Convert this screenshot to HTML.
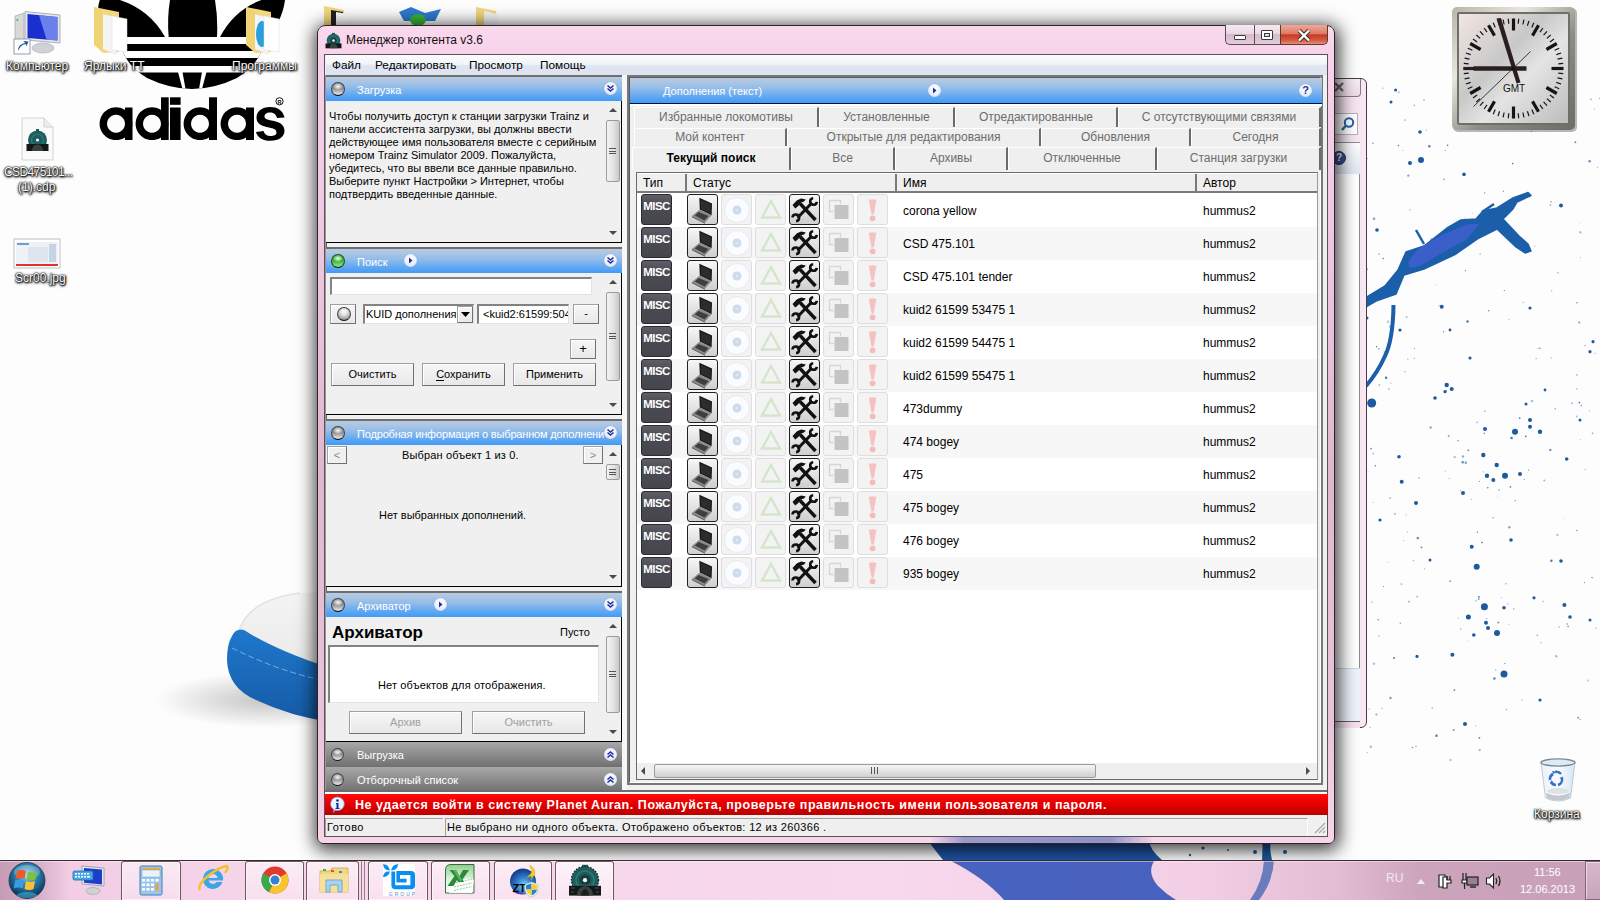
<!DOCTYPE html>
<html><head><meta charset="utf-8">
<style>
*{margin:0;padding:0;box-sizing:border-box}
html,body{width:1600px;height:900px;overflow:hidden;background:#fdfdfd;font-family:"Liberation Sans",sans-serif;font-size:11px;color:#000}
.a{position:absolute}
.t{position:absolute;white-space:nowrap;line-height:1}
/* window */
#win{left:317px;top:25px;width:1018px;height:819px;border-radius:8px 8px 6px 6px;background:linear-gradient(180deg,#f9d8ec 0%,#f8d2ea 4%,#ecc6de 30%,#dfb8d0 55%,#e8c4da 85%,#f8d6ea 100%);border:1px solid #2e2228;box-shadow:1px 3px 18px 3px rgba(0,0,0,.78)}
#client{left:324px;top:54px;width:1004px;height:783px;background:#f0f0f0;border:1px solid #5e5058}
.menu{left:326px;top:55px;width:1001px;height:20px;background:linear-gradient(#fbfcfd 0%,#f1f3f9 45%,#dfe4f1 55%,#dde3f0 100%)}
.mi{top:60px;font-size:11.8px}
.hdr{position:absolute;height:24px;background:linear-gradient(#bacbe0 0%,#95bde9 40%,#5aa5f2 80%,#409bf7 100%);color:#fff}
.hdrg{position:absolute;height:25px;background:linear-gradient(#a8a8a8 0%,#8c8c8c 50%,#707070 100%);color:#fff}
.ball{position:absolute;width:14px;height:14px;border-radius:50%;border:1.5px solid #404448;border-bottom-color:#0c0f14;background:radial-gradient(ellipse 40% 28% at 50% 30%,#f4f4f4 0%,rgba(244,244,244,.6) 50%,rgba(244,244,244,0) 100%),linear-gradient(#9c9c9c 0%,#8a8a8a 45%,#b8b8b8 70%,#dcdcdc 90%,#cfcfcf 100%)}
.ballg{border-color:#1f4f1f;border-bottom-color:#0a200a;background:radial-gradient(ellipse 40% 28% at 50% 30%,#e8ffe8 0%,rgba(220,255,220,.6) 50%,rgba(220,255,220,0) 100%),linear-gradient(#4cc04a 0%,#3aaa38 45%,#6ad468 75%,#8ee28a 100%)}
.chev{position:absolute;width:13px;height:13px;border-radius:50%;background:radial-gradient(circle at 50% 40%,#fff 0%,#eef2ff 50%,#b9c6ea 100%);box-shadow:0 0 1px #7f8fc0}
.pline{position:absolute;left:326px;width:296px;height:1px;background:#000}
.gline{position:absolute;left:326px;width:296px;height:2px;background:#6e6e6e}
.sb{position:absolute;width:15px;background:#f0f0f0}
.btn{position:absolute;background:linear-gradient(#f6f6f6,#e8e8e8);border:1px solid #a0a0a0;border-right-color:#707070;border-bottom-color:#707070;box-shadow:inset 1px 1px 0 #fff;text-align:center}
.tab{position:absolute;height:21px;background:#efefef;border-top:1px solid #fff;border-left:1px solid #fff;border-right:2px solid #6b6b6b;color:#6d6d6d;text-align:center;font-size:12px;line-height:19px}
.row{position:absolute;left:637px;width:680px;height:33px}
.ic{position:absolute;width:31px;height:31px;border-radius:3px}
.misc{background:linear-gradient(#5e5e66,#4a4a52 40%,#46464e);border:1px solid #2a2a30;color:#fff;font-weight:bold;font-size:11.5px;text-align:center;line-height:22px;letter-spacing:-0.6px}
.ion{background:linear-gradient(#f7f7f7,#cfcfcf);border:1px solid #1f1f1f}
.ioff{background:#f3f3f3;border:1px solid #dedede}

.up{position:absolute;width:0;height:0;border-left:4px solid transparent;border-right:4px solid transparent;border-bottom:4px solid #4a4a4a}
.dn{position:absolute;width:0;height:0;border-left:4px solid transparent;border-right:4px solid transparent;border-top:4px solid #4a4a4a}
.thumb{position:absolute;width:14px;border:1px solid #9c9c9c;border-radius:2px;background:linear-gradient(90deg,#f4f4f4,#e4e4e4 50%,#c9c9c9)}

.lt{font-size:12px}

.dl{font-size:12px;color:#fff;text-shadow:0 0 2px #000,1px 1px 2px #000,0 0 1px #000,0 1px 3px #000}
</style></head><body>

<!-- ============ DESKTOP ============ -->
<svg class="a" style="left:0;top:0" width="320" height="160" viewBox="0 0 320 160">
<defs><clipPath id="trc"><path d="M99.8 0H285Q282 24 264 38Q263 62 237 78Q214 89 192 89Q170 89 147 78Q121 62 120 38Q92 22 99.8 0z"/></clipPath></defs>
<g clip-path="url(#trc)">
<rect x="90" y="0" width="200" height="95" fill="#000"/>
<path d="M120 0H170Q167 18 168.7 37H165Q150 10 120 0z" fill="#fff"/>
<path d="M215 0H261.3Q234 10 220 37H217Q218 18 215 0z" fill="#fff"/>
<rect x="90" y="37" width="200" height="7" fill="#fff"/>
<rect x="90" y="51" width="200" height="7" fill="#fff"/>
<rect x="90" y="66" width="200" height="6.5" fill="#fff"/>
<path d="M178 72h4.5l3 17h-3z" fill="#fff"/>
<path d="M202 72h4.5l-4.5 17h-3z" fill="#fff"/>
</g>
<g fill="#000">
<path fill-rule="evenodd" d="M116 107.3a16.4 16.4 0 1 0 0.01 0zM116 114.8a9 9 0 1 1-0.01 0z"/>
<rect x="125" y="107.5" width="7.5" height="32.5"/>
<path fill-rule="evenodd" d="M152 107.3a16.4 16.4 0 1 0 0.01 0zM152 114.8a9 9 0 1 1-0.01 0z"/>
<rect x="161" y="97.3" width="7.7" height="42.7"/>
<rect x="170" y="107.5" width="10.6" height="32.5"/>
<rect x="170" y="97.3" width="10.6" height="7.5"/>
<path fill-rule="evenodd" d="M200 107.3a16.4 16.4 0 1 0 0.01 0zM200 114.8a9 9 0 1 1-0.01 0z"/>
<rect x="209" y="97.3" width="8" height="42.7"/>
<path fill-rule="evenodd" d="M237 107.3a16.4 16.4 0 1 0 0.01 0zM237 114.8a9 9 0 1 1-0.01 0z"/>
<rect x="246" y="107.5" width="8" height="32.5"/>
<path d="M284.5 117.5C283 110 277 107 270 107C262 107 256.5 111.5 256.5 117.5C256.5 124.5 262 126 269 127.5C274 128.5 276.5 129.5 276.5 132.5C276.5 135 274 136 270.5 136C267 136 264.5 134.5 263.5 131L256 132C257.5 137.5 262.5 140.8 270.5 140.8C279 140.8 284.5 136.5 284.5 131C284.5 123.8 278.5 122 271.5 120.5C267 119.5 264.5 119 264.5 116.5C264.5 114 267 112.5 270 112.5C273.5 112.5 276 114 277 118z"/>
<circle cx="279.5" cy="101.3" r="3.6" fill="none" stroke="#000" stroke-width="0.9"/><text x="279.5" y="103.6" font-family="Liberation Sans" font-weight="bold" font-size="5.5" text-anchor="middle" fill="#000">R</text>
</g>
</svg>
<svg class="a" style="left:150px;top:580px" width="180" height="160" viewBox="150 580 180 160">
<defs><radialGradient id="shd" cx="0.5" cy="0.5" r="0.5"><stop offset="0" stop-color="#000" stop-opacity="0.22"/><stop offset="1" stop-color="#000" stop-opacity="0"/></radialGradient>
<linearGradient id="shw" x1="0" y1="0" x2="0" y2="1"><stop offset="0" stop-color="#f4f4f4"/><stop offset="0.6" stop-color="#ececec"/><stop offset="1" stop-color="#d9d9d9"/></linearGradient>
<linearGradient id="shb" x1="0" y1="0" x2="0" y2="1"><stop offset="0" stop-color="#1f78cc"/><stop offset="1" stop-color="#155aa5"/></linearGradient></defs>
<ellipse cx="265" cy="700" rx="110" ry="28" fill="url(#shd)"/>
<path d="M238 634Q246 600 300 593L330 592V690Q290 680 238 640z" fill="url(#shw)"/><path d="M238 634Q246 600 300 593" fill="none" stroke="#e2e2e2" stroke-width="1.5"/>
<path d="M232 636Q236 628 244 630Q275 650 330 668V722Q290 716 256 700Q228 688 227 660Q227 644 232 636z" fill="url(#shb)"/>
<path d="M232 648Q280 672 330 682" fill="none" stroke="#8cc0ee" stroke-width="0.8" stroke-dasharray="6 3"/>
</svg>
<svg class="a" style="left:1330px;top:80px" width="270" height="700" viewBox="1330 80 270 700">
<path d="M1340 318L1362 300 1385 286 1398 270 1406 252 1424 246 1447 228 1461 220 1476 219 1483 211 1497 208 1513 198 1528 192.5 1531 195.5 1517 202 1513 209 1503 219 1519 236 1528 244 1531 251 1525 253 1516 247 1497 229 1479 238 1456 254 1424 269 1404 275 1396 294 1376 301 1352 315 1340 335z" fill="#1b5fab" stroke="#1b5fab" stroke-width="1.5" stroke-linejoin="round"/>
<path d="M1408 262L1418 249 1440 236 1468 224 1479 224 1466 240 1445 251 1420 266 1410 268z" fill="#3b5fc9"/>
<path d="M1393.5 305Q1393 340 1385 356Q1378 372 1366 386" fill="none" stroke="#1b5fab" stroke-width="4"/>
<path d="M1424 244L1416 230M1482 212l12-8" stroke="#1b5fab" stroke-width="2.5"/>
<circle cx="1441.7" cy="306.7" r="2" fill="#1d5a9e"/>
<circle cx="1530" cy="308" r="1.6" fill="#1d5a9e"/>
<circle cx="1470" cy="358" r="1.6" fill="#1d5a9e"/>
<circle cx="1446.7" cy="385" r="2.2" fill="#1d5a9e"/>
<circle cx="1451.7" cy="389" r="2" fill="#1d5a9e"/>
<circle cx="1445" cy="391.7" r="1.6" fill="#1d5a9e"/>
<circle cx="1435" cy="398" r="1.8" fill="#1d5a9e"/>
<circle cx="1371.7" cy="403" r="4.5" fill="#1d5a9e"/>
<circle cx="1485" cy="429" r="2" fill="#1d5a9e"/>
<circle cx="1515" cy="431.7" r="3" fill="#1d5a9e"/>
<circle cx="1530" cy="420" r="2" fill="#1d5a9e"/>
<circle cx="1530" cy="426.7" r="2" fill="#1d5a9e"/>
<circle cx="1540" cy="431.7" r="2.2" fill="#1d5a9e"/>
<circle cx="1526" cy="404" r="1.5" fill="#1d5a9e"/>
<circle cx="1483.3" cy="455" r="2.2" fill="#1d5a9e"/>
<circle cx="1496.7" cy="465" r="2.2" fill="#1d5a9e"/>
<circle cx="1505" cy="475.7" r="3" fill="#1d5a9e"/>
<circle cx="1487" cy="475.7" r="2.2" fill="#1d5a9e"/>
<circle cx="1493.3" cy="480" r="2" fill="#1d5a9e"/>
<circle cx="1520" cy="474" r="2" fill="#1d5a9e"/>
<circle cx="1566.7" cy="459" r="1.8" fill="#1d5a9e"/>
<circle cx="1401.7" cy="481.7" r="2" fill="#1d5a9e"/>
<circle cx="1463" cy="493" r="2" fill="#1d5a9e"/>
<circle cx="1416" cy="503" r="2" fill="#1d5a9e"/>
<circle cx="1399" cy="456.7" r="1.8" fill="#1d5a9e"/>
<circle cx="1590" cy="351.7" r="1.6" fill="#1d5a9e"/>
<circle cx="1593" cy="341.7" r="1.6" fill="#1d5a9e"/>
<circle cx="1471.7" cy="546.7" r="2" fill="#1d5a9e"/>
<circle cx="1511" cy="540" r="1.8" fill="#1d5a9e"/>
<circle cx="1476.7" cy="566.7" r="3" fill="#1d5a9e"/>
<circle cx="1561" cy="561" r="1.8" fill="#1d5a9e"/>
<circle cx="1484.4" cy="606.7" r="3.5" fill="#1d5a9e"/>
<circle cx="1504" cy="607.7" r="1.8" fill="#1d5a9e"/>
<circle cx="1468.4" cy="617" r="2.5" fill="#1d5a9e"/>
<circle cx="1486" cy="622.7" r="2" fill="#1d5a9e"/>
<circle cx="1488" cy="628" r="2" fill="#1d5a9e"/>
<circle cx="1497" cy="633" r="3" fill="#1d5a9e"/>
<circle cx="1473.8" cy="635" r="1.8" fill="#1d5a9e"/>
<circle cx="1564.4" cy="605" r="2" fill="#1d5a9e"/>
<circle cx="1534" cy="597.8" r="1.6" fill="#1d5a9e"/>
<circle cx="1504" cy="674" r="3.5" fill="#1d5a9e"/>
<circle cx="1452.4" cy="654.7" r="2" fill="#1d5a9e"/>
<circle cx="1417" cy="656.4" r="1.6" fill="#1d5a9e"/>
<circle cx="1465" cy="724" r="2" fill="#1d5a9e"/>
<circle cx="1570" cy="617" r="1.8" fill="#1d5a9e"/>
<circle cx="1395.6" cy="90" r="1.5" fill="#1d5a9e"/>
<circle cx="1391" cy="102" r="1.5" fill="#1d5a9e"/>
<circle cx="1420" cy="132" r="1.8" fill="#1d5a9e"/>
<circle cx="1421" cy="160" r="3" fill="#1d5a9e"/>
<circle cx="1410" cy="163" r="2" fill="#1d5a9e"/>
<circle cx="1464" cy="174.4" r="1.8" fill="#1d5a9e"/>
<circle cx="1561" cy="205.6" r="2" fill="#1d5a9e"/>
<circle cx="1377" cy="230" r="1.8" fill="#1d5a9e"/>
<circle cx="1367" cy="318" r="1.5" fill="#1d5a9e"/>
<circle cx="1400" cy="330" r="1.6" fill="#1d5a9e"/>
<circle cx="1450" cy="330" r="1.4" fill="#1d5a9e"/>
<circle cx="1545" cy="390" r="1.4" fill="#1d5a9e"/>
<circle cx="1580" cy="420" r="1.5" fill="#1d5a9e"/>
<circle cx="1380" cy="520" r="1.6" fill="#1d5a9e"/>
<circle cx="1430" cy="560" r="1.5" fill="#1d5a9e"/>
<circle cx="1540" cy="700" r="1.6" fill="#1d5a9e"/>
<circle cx="1590" cy="620" r="1.5" fill="#1d5a9e"/>
<circle cx="1465.8" cy="462.8" r="1.2" fill="#2a62a8" opacity="0.61"/>
<circle cx="1479.4" cy="481.5" r="0.6" fill="#2a62a8" opacity="0.79"/>
<circle cx="1471.6" cy="499.4" r="0.6" fill="#2a62a8" opacity="0.40"/>
<circle cx="1429.3" cy="146.2" r="1.2" fill="#2a62a8" opacity="0.84"/>
<circle cx="1510.4" cy="486.9" r="0.8" fill="#2a62a8" opacity="0.88"/>
<circle cx="1515.2" cy="500.5" r="0.6" fill="#2a62a8" opacity="0.69"/>
<circle cx="1558.8" cy="127.6" r="0.5" fill="#2a62a8" opacity="0.45"/>
<circle cx="1414.3" cy="105.3" r="0.8" fill="#2a62a8" opacity="0.53"/>
<circle cx="1499.8" cy="216.8" r="0.6" fill="#2a62a8" opacity="0.70"/>
<circle cx="1477.4" cy="532.2" r="0.8" fill="#2a62a8" opacity="0.71"/>
<circle cx="1454.7" cy="457.1" r="1.2" fill="#2a62a8" opacity="0.40"/>
<circle cx="1417.2" cy="596.6" r="0.9" fill="#2a62a8" opacity="0.51"/>
<circle cx="1372.2" cy="602.2" r="0.8" fill="#2a62a8" opacity="0.41"/>
<circle cx="1426.3" cy="130.1" r="0.5" fill="#2a62a8" opacity="0.82"/>
<circle cx="1355.1" cy="226.6" r="0.5" fill="#2a62a8" opacity="0.61"/>
<circle cx="1595.2" cy="353.3" r="0.5" fill="#2a62a8" opacity="0.66"/>
<circle cx="1403.6" cy="540.6" r="0.7" fill="#2a62a8" opacity="0.40"/>
<circle cx="1436.5" cy="735.8" r="1.2" fill="#2a62a8" opacity="0.86"/>
<circle cx="1388.0" cy="562.2" r="0.5" fill="#2a62a8" opacity="0.38"/>
<circle cx="1550.3" cy="204.9" r="0.9" fill="#2a62a8" opacity="0.45"/>
<circle cx="1479.7" cy="750.1" r="1.2" fill="#2a62a8" opacity="0.42"/>
<circle cx="1512.7" cy="163.6" r="0.8" fill="#2a62a8" opacity="0.89"/>
<circle cx="1355.1" cy="668.4" r="1.2" fill="#2a62a8" opacity="0.68"/>
<circle cx="1599.5" cy="98.3" r="0.6" fill="#2a62a8" opacity="0.57"/>
<circle cx="1564.3" cy="518.2" r="0.5" fill="#2a62a8" opacity="0.37"/>
<circle cx="1390.9" cy="383.0" r="0.5" fill="#2a62a8" opacity="0.77"/>
<circle cx="1435.6" cy="285.0" r="0.5" fill="#2a62a8" opacity="0.39"/>
<circle cx="1406.1" cy="514.7" r="0.5" fill="#2a62a8" opacity="0.68"/>
<circle cx="1446.1" cy="390.9" r="0.9" fill="#2a62a8" opacity="0.62"/>
<circle cx="1495.8" cy="669.9" r="0.6" fill="#2a62a8" opacity="0.69"/>
<circle cx="1431.1" cy="239.2" r="0.9" fill="#2a62a8" opacity="0.49"/>
<circle cx="1401.5" cy="584.1" r="0.9" fill="#2a62a8" opacity="0.46"/>
<circle cx="1587.8" cy="680.5" r="0.9" fill="#2a62a8" opacity="0.39"/>
<circle cx="1366.6" cy="158.6" r="0.9" fill="#2a62a8" opacity="0.88"/>
<circle cx="1413.4" cy="560.6" r="0.7" fill="#2a62a8" opacity="0.58"/>
<circle cx="1576.7" cy="416.4" r="0.9" fill="#2a62a8" opacity="0.45"/>
<circle cx="1531.5" cy="131.4" r="0.6" fill="#2a62a8" opacity="0.61"/>
<circle cx="1515.1" cy="500.7" r="0.5" fill="#2a62a8" opacity="0.50"/>
<circle cx="1579.8" cy="222.7" r="0.5" fill="#2a62a8" opacity="0.39"/>
<circle cx="1455.8" cy="253.1" r="0.5" fill="#2a62a8" opacity="0.45"/>
<circle cx="1445.4" cy="471.2" r="0.6" fill="#2a62a8" opacity="0.40"/>
<circle cx="1388.9" cy="389.0" r="0.7" fill="#2a62a8" opacity="0.71"/>
<circle cx="1524.3" cy="479.5" r="0.6" fill="#2a62a8" opacity="0.67"/>
<circle cx="1581.3" cy="405.5" r="0.7" fill="#2a62a8" opacity="0.74"/>
<circle cx="1590.9" cy="99.3" r="1" fill="#2a62a8" opacity="0.39"/>
<circle cx="1371.5" cy="295.0" r="0.6" fill="#2a62a8" opacity="0.90"/>
<circle cx="1373.4" cy="453.6" r="1" fill="#2a62a8" opacity="0.37"/>
<circle cx="1584.4" cy="582.6" r="0.6" fill="#2a62a8" opacity="0.79"/>
<circle cx="1579.2" cy="322.5" r="1" fill="#2a62a8" opacity="0.61"/>
<circle cx="1374.0" cy="663.7" r="1.2" fill="#2a62a8" opacity="0.37"/>
<circle cx="1477.5" cy="94.8" r="1" fill="#2a62a8" opacity="0.56"/>
<circle cx="1497.8" cy="496.0" r="0.5" fill="#2a62a8" opacity="0.40"/>
<circle cx="1383.3" cy="258.6" r="0.8" fill="#2a62a8" opacity="0.75"/>
<circle cx="1450.2" cy="581.2" r="0.9" fill="#2a62a8" opacity="0.60"/>
<circle cx="1468.3" cy="450.3" r="0.9" fill="#2a62a8" opacity="0.76"/>
<circle cx="1362.3" cy="490.9" r="0.8" fill="#2a62a8" opacity="0.36"/>
<circle cx="1589.6" cy="161.2" r="1.2" fill="#2a62a8" opacity="0.69"/>
<circle cx="1580.5" cy="257.7" r="0.5" fill="#2a62a8" opacity="0.55"/>
<circle cx="1390.1" cy="497.9" r="0.9" fill="#2a62a8" opacity="0.44"/>
<circle cx="1576.9" cy="530.5" r="0.8" fill="#2a62a8" opacity="0.62"/>
<circle cx="1414.2" cy="358.2" r="0.7" fill="#2a62a8" opacity="0.46"/>
<circle cx="1460.6" cy="629.0" r="0.6" fill="#2a62a8" opacity="0.83"/>
<circle cx="1449.2" cy="478.6" r="0.7" fill="#2a62a8" opacity="0.47"/>
<circle cx="1388.0" cy="321.8" r="1.2" fill="#2a62a8" opacity="0.37"/>
<circle cx="1370.7" cy="746.7" r="1.2" fill="#2a62a8" opacity="0.44"/>
<circle cx="1465.4" cy="270.7" r="0.6" fill="#2a62a8" opacity="0.81"/>
<circle cx="1448.7" cy="436.0" r="1" fill="#2a62a8" opacity="0.52"/>

<circle cx="1558.0" cy="272.7" r="0.9" fill="#2a62a8" opacity="0.37"/>
<circle cx="1528.6" cy="470.1" r="0.7" fill="#2a62a8" opacity="0.71"/>
<circle cx="1493.2" cy="517.7" r="0.8" fill="#2a62a8" opacity="0.60"/>
<circle cx="1361.1" cy="645.0" r="0.6" fill="#2a62a8" opacity="0.78"/>

<circle cx="1509.3" cy="527.2" r="1.2" fill="#2a62a8" opacity="0.55"/>
<circle cx="1374.1" cy="218.7" r="1.2" fill="#2a62a8" opacity="0.61"/>
<circle cx="1398.8" cy="92.3" r="0.8" fill="#2a62a8" opacity="0.64"/>
<circle cx="1363.9" cy="237.9" r="1.2" fill="#2a62a8" opacity="0.54"/>
<circle cx="1525.8" cy="436.3" r="0.9" fill="#2a62a8" opacity="0.90"/>
<circle cx="1394.0" cy="657.9" r="1" fill="#2a62a8" opacity="0.85"/>
<circle cx="1376.4" cy="714.5" r="1" fill="#2a62a8" opacity="0.56"/>
<circle cx="1465.4" cy="217.9" r="0.5" fill="#2a62a8" opacity="0.56"/>
<circle cx="1494.4" cy="678.5" r="1.2" fill="#2a62a8" opacity="0.80"/>
<circle cx="1439.1" cy="305.4" r="0.6" fill="#2a62a8" opacity="0.40"/>
<circle cx="1567.2" cy="623.9" r="1" fill="#2a62a8" opacity="0.42"/>
<circle cx="1414.4" cy="348.4" r="0.5" fill="#2a62a8" opacity="0.89"/>
<circle cx="1486.6" cy="618.8" r="0.7" fill="#2a62a8" opacity="0.49"/>
<circle cx="1531.0" cy="95.6" r="0.9" fill="#2a62a8" opacity="0.40"/>
<circle cx="1463.0" cy="456.5" r="1.2" fill="#2a62a8" opacity="0.50"/>
<circle cx="1580.3" cy="232.3" r="1.2" fill="#2a62a8" opacity="0.39"/>
<circle cx="1551.0" cy="201.7" r="0.7" fill="#2a62a8" opacity="0.73"/>
<circle cx="1579.4" cy="402.6" r="0.9" fill="#2a62a8" opacity="0.85"/>
<circle cx="1482.0" cy="542.6" r="0.8" fill="#2a62a8" opacity="0.87"/>
<circle cx="1475.7" cy="725.7" r="0.5" fill="#2a62a8" opacity="0.77"/>
<circle cx="1462.7" cy="462.2" r="1.2" fill="#2a62a8" opacity="0.75"/>
<circle cx="1511.5" cy="437.9" r="1.2" fill="#2a62a8" opacity="0.85"/>
<circle cx="1417.8" cy="538.1" r="1.2" fill="#2a62a8" opacity="0.83"/>
<circle cx="1504.3" cy="290.5" r="0.6" fill="#2a62a8" opacity="0.88"/>
<circle cx="1483.4" cy="471.8" r="0.6" fill="#2a62a8" opacity="0.58"/>
<circle cx="1383.0" cy="88.3" r="0.8" fill="#2a62a8" opacity="0.37"/>
<circle cx="1592.5" cy="433.3" r="0.8" fill="#2a62a8" opacity="0.65"/>
<circle cx="1597.4" cy="167.3" r="0.5" fill="#2a62a8" opacity="0.73"/>
<circle cx="1371.1" cy="448.6" r="0.8" fill="#2a62a8" opacity="0.86"/>
<circle cx="1551.1" cy="357.8" r="0.6" fill="#2a62a8" opacity="0.61"/>
<circle cx="1386.1" cy="377.7" r="1.2" fill="#2a62a8" opacity="0.86"/>
<circle cx="1580.4" cy="439.4" r="0.5" fill="#2a62a8" opacity="0.46"/>
<circle cx="1506.4" cy="709.6" r="0.6" fill="#2a62a8" opacity="0.74"/>
<circle cx="1594.4" cy="109.0" r="0.6" fill="#2a62a8" opacity="0.47"/>
<circle cx="1523.3" cy="302.4" r="0.7" fill="#2a62a8" opacity="0.48"/>
<circle cx="1477.2" cy="422.3" r="0.9" fill="#2a62a8" opacity="0.42"/>
<circle cx="1480.1" cy="254.1" r="0.6" fill="#2a62a8" opacity="0.74"/>
<circle cx="1570.3" cy="100.7" r="1" fill="#2a62a8" opacity="0.58"/>
<circle cx="1484.7" cy="192.8" r="0.6" fill="#2a62a8" opacity="0.83"/>
<circle cx="1485.8" cy="232.4" r="0.6" fill="#2a62a8" opacity="0.82"/>
<circle cx="1504.9" cy="663.3" r="0.6" fill="#2a62a8" opacity="0.85"/>
<circle cx="1508.8" cy="319.6" r="0.6" fill="#2a62a8" opacity="0.52"/>
<circle cx="1432.2" cy="707.9" r="0.6" fill="#2a62a8" opacity="0.78"/>
<circle cx="1402.7" cy="150.4" r="0.6" fill="#2a62a8" opacity="0.42"/>
<circle cx="1376.6" cy="346.8" r="0.8" fill="#2a62a8" opacity="0.81"/>
<circle cx="1458.3" cy="618.2" r="0.6" fill="#2a62a8" opacity="0.46"/>
<circle cx="1508.9" cy="624.2" r="0.5" fill="#2a62a8" opacity="0.46"/>
<circle cx="1522.2" cy="700.2" r="0.7" fill="#2a62a8" opacity="0.41"/>
<circle cx="1478.9" cy="596.8" r="0.9" fill="#2a62a8" opacity="0.90"/>
<circle cx="1559.1" cy="626.9" r="0.8" fill="#2a62a8" opacity="0.41"/>
<circle cx="1364.2" cy="457.4" r="0.9" fill="#2a62a8" opacity="0.85"/>
<circle cx="1472.9" cy="213.0" r="0.5" fill="#2a62a8" opacity="0.46"/>

<circle cx="1370.2" cy="727.3" r="0.8" fill="#2a62a8" opacity="0.39"/>
<circle cx="1378.7" cy="348.8" r="0.8" fill="#2a62a8" opacity="0.63"/>
<circle cx="1460.4" cy="490.6" r="0.5" fill="#2a62a8" opacity="0.70"/>
<circle cx="1365.0" cy="220.2" r="0.8" fill="#2a62a8" opacity="0.60"/>
<circle cx="1536.1" cy="358.6" r="0.6" fill="#2a62a8" opacity="0.68"/>
<circle cx="1378.2" cy="619.8" r="0.7" fill="#2a62a8" opacity="0.84"/>
<circle cx="1551.4" cy="560.7" r="1.2" fill="#2a62a8" opacity="0.85"/>
<circle cx="1585.2" cy="469.5" r="0.6" fill="#2a62a8" opacity="0.63"/>
<circle cx="1595.8" cy="628.3" r="0.7" fill="#2a62a8" opacity="0.50"/>
<circle cx="1383.5" cy="586.5" r="0.6" fill="#2a62a8" opacity="0.80"/>
<circle cx="1454.4" cy="690.2" r="0.9" fill="#2a62a8" opacity="0.73"/>
<circle cx="1543.0" cy="601.5" r="0.8" fill="#2a62a8" opacity="0.46"/>
<circle cx="1400.3" cy="623.2" r="0.7" fill="#2a62a8" opacity="0.61"/>
<circle cx="1357.6" cy="325.1" r="1" fill="#2a62a8" opacity="0.85"/>
<circle cx="1367.1" cy="269.3" r="1" fill="#2a62a8" opacity="0.51"/>
<circle cx="1407.9" cy="359.1" r="0.6" fill="#2a62a8" opacity="0.64"/>
<circle cx="1450.5" cy="759.9" r="1" fill="#2a62a8" opacity="0.47"/>
<circle cx="1384.3" cy="351.9" r="0.9" fill="#2a62a8" opacity="0.36"/>
<circle cx="1505.8" cy="583.7" r="0.7" fill="#2a62a8" opacity="0.59"/>
<circle cx="1478.7" cy="598.9" r="1" fill="#2a62a8" opacity="0.56"/>
<circle cx="1379.1" cy="254.3" r="0.7" fill="#2a62a8" opacity="0.65"/>
<circle cx="1479.4" cy="737.8" r="0.9" fill="#2a62a8" opacity="0.82"/>
<circle cx="1379.4" cy="384.9" r="1" fill="#2a62a8" opacity="0.39"/>
<circle cx="1501.4" cy="597.5" r="0.5" fill="#2a62a8" opacity="0.56"/>
<circle cx="1585.0" cy="345.5" r="0.6" fill="#2a62a8" opacity="0.82"/>
<circle cx="1487.8" cy="487.7" r="0.8" fill="#2a62a8" opacity="0.87"/>
<circle cx="1458.1" cy="440.6" r="0.9" fill="#2a62a8" opacity="0.52"/>
<circle cx="1484.9" cy="411.2" r="0.7" fill="#2a62a8" opacity="0.66"/>
<circle cx="1424.5" cy="568.7" r="0.7" fill="#2a62a8" opacity="0.36"/>
<circle cx="1544.3" cy="480.4" r="1" fill="#2a62a8" opacity="0.44"/>
<circle cx="1539.9" cy="348.2" r="0.7" fill="#2a62a8" opacity="0.76"/>
<circle cx="1367.3" cy="752.4" r="0.7" fill="#2a62a8" opacity="0.39"/>
<circle cx="1576.9" cy="374.9" r="0.8" fill="#2a62a8" opacity="0.49"/>
<circle cx="1540.1" cy="115.7" r="0.5" fill="#2a62a8" opacity="0.87"/>
<circle cx="1532.1" cy="401.1" r="1.2" fill="#2a62a8" opacity="0.48"/>
<circle cx="1528.1" cy="119.0" r="0.8" fill="#2a62a8" opacity="0.60"/>
<circle cx="1404.9" cy="120.1" r="0.9" fill="#2a62a8" opacity="0.44"/>
<circle cx="1444.0" cy="179.4" r="0.8" fill="#2a62a8" opacity="0.60"/>
<circle cx="1419.2" cy="478.0" r="0.8" fill="#2a62a8" opacity="0.55"/>
<circle cx="1537.2" cy="635.2" r="0.6" fill="#2a62a8" opacity="0.87"/>
<circle cx="1534.9" cy="245.9" r="0.5" fill="#2a62a8" opacity="0.63"/>
<circle cx="1430.6" cy="427.5" r="1.2" fill="#2a62a8" opacity="0.55"/>
<circle cx="1421.5" cy="547.4" r="0.9" fill="#2a62a8" opacity="0.73"/>
<circle cx="1401.6" cy="273.1" r="0.6" fill="#2a62a8" opacity="0.45"/>
<circle cx="1416.0" cy="746.3" r="0.6" fill="#2a62a8" opacity="0.83"/>
<circle cx="1364.7" cy="126.0" r="0.7" fill="#2a62a8" opacity="0.49"/>
<circle cx="1361.6" cy="110.7" r="0.6" fill="#2a62a8" opacity="0.65"/>
<circle cx="1372.8" cy="143.3" r="1" fill="#2a62a8" opacity="0.44"/>
<circle cx="1412.5" cy="747.5" r="0.8" fill="#2a62a8" opacity="0.61"/>
<circle cx="1406.6" cy="317.0" r="1" fill="#2a62a8" opacity="0.42"/>
<circle cx="1568.1" cy="626.5" r="0.8" fill="#2a62a8" opacity="0.80"/>
<circle cx="1507.8" cy="603.9" r="0.6" fill="#2a62a8" opacity="0.59"/>
<circle cx="1538.1" cy="348.3" r="0.6" fill="#2a62a8" opacity="0.55"/>

<circle cx="1541.0" cy="642.7" r="0.6" fill="#2a62a8" opacity="0.59"/>
<circle cx="1445.5" cy="150.5" r="0.7" fill="#2a62a8" opacity="0.39"/>
<circle cx="1375.3" cy="465.8" r="0.8" fill="#2a62a8" opacity="0.80"/>
<circle cx="1468.6" cy="640.9" r="0.5" fill="#2a62a8" opacity="0.39"/>
<circle cx="1407.2" cy="531.9" r="0.5" fill="#2a62a8" opacity="0.73"/>
<circle cx="1476.2" cy="600.8" r="0.7" fill="#2a62a8" opacity="0.51"/>
<circle cx="1390.0" cy="326.5" r="1" fill="#2a62a8" opacity="0.53"/>
<circle cx="1577.0" cy="302.7" r="0.8" fill="#2a62a8" opacity="0.66"/>
<circle cx="1580.0" cy="719.5" r="0.7" fill="#2a62a8" opacity="0.59"/>
<circle cx="1551.7" cy="290.7" r="0.7" fill="#2a62a8" opacity="0.47"/>
<circle cx="1592.1" cy="577.6" r="0.9" fill="#2a62a8" opacity="0.49"/>
<circle cx="1443.6" cy="331.8" r="0.7" fill="#2a62a8" opacity="0.72"/>
<circle cx="1498.3" cy="622.4" r="1" fill="#2a62a8" opacity="0.66"/>
<circle cx="1550.3" cy="449.9" r="1.2" fill="#2a62a8" opacity="0.68"/>
<circle cx="1398.4" cy="145.6" r="0.8" fill="#2a62a8" opacity="0.83"/>
<circle cx="1424.0" cy="100.0" r="0.9" fill="#2a62a8" opacity="0.38"/>
<circle cx="1393.9" cy="284.7" r="0.5" fill="#2a62a8" opacity="0.71"/>
<circle cx="1552.1" cy="128.2" r="0.9" fill="#2a62a8" opacity="0.52"/>
<circle cx="1488.6" cy="310.8" r="0.7" fill="#2a62a8" opacity="0.76"/>
<circle cx="1575.3" cy="142.2" r="1" fill="#2a62a8" opacity="0.71"/>
<circle cx="1378.9" cy="636.0" r="0.8" fill="#2a62a8" opacity="0.48"/>
<circle cx="1409.0" cy="601.6" r="0.9" fill="#2a62a8" opacity="0.54"/>
<circle cx="1467.5" cy="321.5" r="1.2" fill="#2a62a8" opacity="0.88"/>
<circle cx="1519.7" cy="418.2" r="0.9" fill="#2a62a8" opacity="0.79"/>
<circle cx="1372.8" cy="502.3" r="0.5" fill="#2a62a8" opacity="0.58"/>
<circle cx="1557.4" cy="535.0" r="1.2" fill="#2a62a8" opacity="0.35"/>
<circle cx="1447.6" cy="145.2" r="0.8" fill="#2a62a8" opacity="0.88"/>
<circle cx="1511.9" cy="438.6" r="1" fill="#2a62a8" opacity="0.36"/>
<circle cx="1381.9" cy="708.4" r="0.6" fill="#2a62a8" opacity="0.49"/>
<circle cx="1394.8" cy="513.7" r="1" fill="#2a62a8" opacity="0.44"/>
<circle cx="1405.1" cy="371.8" r="0.7" fill="#2a62a8" opacity="0.50"/>
<circle cx="1572.1" cy="403.2" r="1" fill="#2a62a8" opacity="0.41"/>
<circle cx="1513.8" cy="608.8" r="0.6" fill="#2a62a8" opacity="0.85"/>
<circle cx="1539.5" cy="96.6" r="0.8" fill="#2a62a8" opacity="0.85"/>
<circle cx="1363.9" cy="158.4" r="0.6" fill="#2a62a8" opacity="0.55"/>
<circle cx="1499.1" cy="490.0" r="0.8" fill="#2a62a8" opacity="0.68"/>
<circle cx="1409.9" cy="209.9" r="0.7" fill="#2a62a8" opacity="0.57"/>
<circle cx="1578.1" cy="717.7" r="1" fill="#2a62a8" opacity="0.65"/>
<circle cx="1555.2" cy="408.7" r="0.7" fill="#2a62a8" opacity="0.62"/>
<circle cx="1453.6" cy="730.1" r="1" fill="#2a62a8" opacity="0.65"/>
<circle cx="1589.5" cy="410.8" r="0.6" fill="#2a62a8" opacity="0.57"/>
<circle cx="1408.3" cy="175.6" r="1.2" fill="#2a62a8" opacity="0.56"/>
<circle cx="1484.3" cy="433.2" r="0.7" fill="#2a62a8" opacity="0.78"/>
<circle cx="1369.2" cy="708.9" r="0.5" fill="#2a62a8" opacity="0.83"/>
<circle cx="1576.8" cy="388.8" r="0.6" fill="#2a62a8" opacity="0.74"/>
<circle cx="1503.5" cy="191.2" r="0.6" fill="#2a62a8" opacity="0.77"/>
<circle cx="1390.5" cy="698.0" r="1.2" fill="#2a62a8" opacity="0.63"/>

<circle cx="1368.0" cy="471.0" r="0.6" fill="#2a62a8" opacity="0.35"/>
<circle cx="1556.2" cy="656.2" r="1.2" fill="#2a62a8" opacity="0.42"/></svg>
<svg class="a" style="left:850px;top:830px" width="500" height="70" viewBox="850 830 500 70">
<path d="M925 836H1150Q1146 846 1162 860H943Q933 848 925 836z" fill="#1f55a6"/>
<path d="M1144 846q6 3 8 8l-5 2z" fill="#1f55a6"/>
<path d="M1262 836h9q-2 12 1 24h-10q1-12 0-24z" fill="#1d5aa0"/>
<circle cx="1203" cy="848" r="1.6" fill="#1d5aa0"/><circle cx="1255" cy="852" r="2" fill="#1d5aa0"/><circle cx="1285" cy="852" r="2" fill="#1d5aa0"/><circle cx="1190" cy="855" r="1.2" fill="#1d5aa0"/><circle cx="1228" cy="850" r="1" fill="#1d5aa0"/>
</svg>
<!-- computer icon -->
<svg class="a" style="left:12px;top:10px" width="52" height="46" viewBox="0 0 52 46">
<path d="M3 6l9-3v33l-9-2z" fill="#d8d8d8" stroke="#a0a0a0" stroke-width="0.6"/>
<rect x="4.5" y="9" width="1.6" height="2" fill="#3c3"/>
<path d="M13 1.5l35 3.5v28l-35-3z" fill="#e4e6ea" stroke="#9aa0a8" stroke-width="0.8"/>
<path d="M15.5 4l30 3v23.5l-30-2.6z" fill="#1a2fd0"/>
<path d="M27 5.3l18.5 1.8v23.3l-11-1z" fill="#7f95f0" opacity="0.8"/>
<ellipse cx="31" cy="38" rx="11" ry="5" fill="#cfd2d6" stroke="#a8abb0" stroke-width="0.6"/>
<rect x="2" y="29" width="16" height="15" fill="#fff" stroke="#7c8796" stroke-width="0.8"/>
<path d="M6 41q0-7 7-8l-1.5-2 5 0.5-2 4.5-1-2q-5 1-7.5 7z" fill="#1f5aa8"/>
</svg>
<div class="t dl" style="left:6px;top:60px">Компьютер</div>
<!-- folder icons -->
<svg class="a" style="left:93px;top:6px" width="36" height="50" viewBox="0 0 36 50"><path d="M1 1l25 5v40l-15 1-10-8z" fill="#f2d77c"/><path d="M9 8l14 3v37l-14-5z" fill="#f5f5f5" stroke="#ddd" stroke-width="0.5"/><path d="M19 10l15 3v33l-15-2z" fill="#fff" stroke="#ddd" stroke-width="0.5"/><path d="M1 1l9 4v42l-9-9z" fill="#f0d374"/></svg>
<div class="t dl" style="left:84px;top:60px">Ярлыки ТТ</div>
<svg class="a" style="left:245px;top:6px" width="36" height="50" viewBox="0 0 36 50"><path d="M1 1l25 5v40l-15 1-10-8z" fill="#f2d77c"/><path d="M9 8l14 3v37l-14-5z" fill="#f5f5f5" stroke="#ddd" stroke-width="0.5"/><ellipse cx="17" cy="28" rx="6" ry="13" fill="#2a9fe0"/><path d="M19 10l15 3v33l-15-2z" fill="#fff" stroke="#ddd" stroke-width="0.5"/><path d="M1 1l9 4v42l-9-9z" fill="#f0d374"/></svg>
<div class="t dl" style="left:232px;top:60px">Программы</div>
<!-- cdp file -->
<svg class="a" style="left:20px;top:116px" width="36" height="46" viewBox="0 0 36 46"><path d="M2 2h22l9 9v33H2z" fill="#fafafa" stroke="#c8c8c8" stroke-width="0.8"/><path d="M24 2v9h9" fill="#eee" stroke="#c8c8c8" stroke-width="0.8"/><circle cx="17.5" cy="24" r="9.5" fill="#1f5d5d"/><circle cx="17.5" cy="24" r="6" fill="none" stroke="#2f7a78" stroke-width="1.2"/><circle cx="17.5" cy="24" r="1.6" fill="#f2f4f4"/><rect x="6.5" y="28" width="22" height="7" fill="#141818"/><path d="M12 35Q12 29 17.5 28.5Q23 29 23 35" fill="#3a3f3f"/><rect x="16" y="13" width="3" height="2.5" fill="#1f5a5a"/></svg>
<div class="t dl" style="left:4px;top:166px;letter-spacing:-0.6px">CSD475101...</div>
<div class="t dl" style="left:18px;top:181px">(1).cdp</div>
<!-- jpg -->
<svg class="a" style="left:13px;top:238px" width="48" height="32" viewBox="0 0 48 32"><rect x="1" y="1" width="46" height="29" fill="#fff" stroke="#c0c0c0"/><rect x="3" y="4" width="42" height="23" fill="#eef1f6"/><rect x="4" y="5" width="12" height="2" fill="#6a9fd4"/><rect x="15" y="9" width="20" height="15" fill="#dfe5ee"/><rect x="36" y="6" width="7" height="18" fill="#c5d3e6"/><rect x="3" y="26" width="42" height="2" fill="#d33"/></svg>
<div class="t dl" style="left:15px;top:272px">Scr00.jpg</div>
<!-- recycle bin -->
<svg class="a" style="left:1538px;top:756px" width="40" height="50" viewBox="0 0 40 50">
<defs><linearGradient id="bng" x1="0" y1="0" x2="1" y2="0"><stop offset="0" stop-color="#e8f2fb"/><stop offset="0.5" stop-color="#f8fbff"/><stop offset="1" stop-color="#d6e6f4"/></linearGradient></defs>
<path d="M3 6l4.5 36q12.5 6 25 0L37 6z" fill="url(#bng)" stroke="#a8b8c6" stroke-width="0.7"/>
<ellipse cx="20" cy="6.5" rx="17" ry="3.6" fill="#dcebf8" stroke="#7c8a96" stroke-width="1.4"/>
<path d="M8 37q12 5 24 0l-1 5q-11 5-22 0z" fill="#c4c8cc"/>
<ellipse cx="20" cy="35" rx="11" ry="3" fill="#d8dcdf" opacity="0.8"/>
<g fill="none" stroke="#3a6fc8" stroke-width="2.6">
<path d="M12 24a6 6 0 0 1 3-6"/><path d="M17 16a6 6 0 0 1 6 2"/><path d="M24 22a6 6 0 0 1-4 7"/><path d="M18 29a6 6 0 0 1-5-3"/>
</g>
<path d="M14 15l3.5 0.5-2 3zM25 20.5l-0.5 3.5-3-2zM12 27.5l1.5-3.2 2 2.8z" fill="#3a6fc8"/>
</svg>
<div class="t dl" style="left:1534px;top:808px">Корзина</div>
<!-- partial top icons behind window -->
<svg class="a" style="left:322px;top:4px" width="30" height="24"><path d="M2 2l20 4v18H2z" fill="#f2d77c"/><path d="M9 6l12 2v16H9z" fill="#222"/><path d="M14 8l12 2v14H14z" fill="#fff"/></svg>
<svg class="a" style="left:396px;top:6px" width="48" height="22"><path d="M3 6l12-5 14 6 16-4-6 12H8z" fill="#2f7bd0"/><ellipse cx="22" cy="14" rx="8" ry="6" fill="#39b53a"/></svg>
<svg class="a" style="left:474px;top:5px" width="30" height="24"><path d="M2 2l20 4v18H2z" fill="#f2d77c"/><path d="M10 6l14 3v15H10z" fill="#f6f6f6"/></svg>


<!-- clock gadget -->
<svg class="a" style="left:1450px;top:5px" width="130" height="130" viewBox="0 0 130 130">
<defs>
<linearGradient id="cfr" x1="0" y1="0" x2="1" y2="1"><stop offset="0" stop-color="#b8b4a8"/><stop offset="0.3" stop-color="#e8e6de"/><stop offset="0.6" stop-color="#8a8e84"/><stop offset="1" stop-color="#6a6e66"/></linearGradient>
<linearGradient id="cfa" x1="0" y1="0" x2="1" y2="1"><stop offset="0" stop-color="#f2e6e2"/><stop offset="0.4" stop-color="#c8c8c8"/><stop offset="0.6" stop-color="#e4e4e4"/><stop offset="1" stop-color="#bcbcbc"/></linearGradient>
</defs>
<rect x="3" y="3" width="124" height="124" rx="5" fill="#333" opacity="0.35"/>
<rect x="2" y="2" width="123" height="123" rx="5" fill="url(#cfr)"/>
<rect x="7" y="7" width="113" height="113" rx="2" fill="#6e7068"/>
<rect x="9" y="9" width="109" height="109" fill="url(#cfa)"/>
<g transform="translate(63.5,63.5)" stroke="#151515">
<line x1="0.0" y1="-38.0" x2="0.0" y2="-50.0" stroke-width="3.2"/>
<line x1="4.7" y1="-44.8" x2="5.2" y2="-49.7" stroke-width="1.2"/>
<line x1="9.4" y1="-44.0" x2="10.4" y2="-48.9" stroke-width="1.2"/>
<line x1="13.9" y1="-42.8" x2="15.5" y2="-47.6" stroke-width="1.2"/>
<line x1="18.3" y1="-41.1" x2="20.3" y2="-45.7" stroke-width="1.2"/>
<line x1="19.0" y1="-32.9" x2="25.0" y2="-43.3" stroke-width="3.2"/>
<line x1="26.5" y1="-36.4" x2="29.4" y2="-40.5" stroke-width="1.2"/>
<line x1="30.1" y1="-33.4" x2="33.5" y2="-37.2" stroke-width="1.2"/>
<line x1="33.4" y1="-30.1" x2="37.2" y2="-33.5" stroke-width="1.2"/>
<line x1="36.4" y1="-26.5" x2="40.5" y2="-29.4" stroke-width="1.2"/>
<line x1="32.9" y1="-19.0" x2="43.3" y2="-25.0" stroke-width="3.2"/>
<line x1="41.1" y1="-18.3" x2="45.7" y2="-20.3" stroke-width="1.2"/>
<line x1="42.8" y1="-13.9" x2="47.6" y2="-15.5" stroke-width="1.2"/>
<line x1="44.0" y1="-9.4" x2="48.9" y2="-10.4" stroke-width="1.2"/>
<line x1="44.8" y1="-4.7" x2="49.7" y2="-5.2" stroke-width="1.2"/>
<line x1="38.0" y1="-0.0" x2="50.0" y2="-0.0" stroke-width="3.2"/>
<line x1="44.8" y1="4.7" x2="49.7" y2="5.2" stroke-width="1.2"/>
<line x1="44.0" y1="9.4" x2="48.9" y2="10.4" stroke-width="1.2"/>
<line x1="42.8" y1="13.9" x2="47.6" y2="15.5" stroke-width="1.2"/>
<line x1="41.1" y1="18.3" x2="45.7" y2="20.3" stroke-width="1.2"/>
<line x1="32.9" y1="19.0" x2="43.3" y2="25.0" stroke-width="3.2"/>
<line x1="36.4" y1="26.5" x2="40.5" y2="29.4" stroke-width="1.2"/>
<line x1="33.4" y1="30.1" x2="37.2" y2="33.5" stroke-width="1.2"/>
<line x1="30.1" y1="33.4" x2="33.5" y2="37.2" stroke-width="1.2"/>
<line x1="26.5" y1="36.4" x2="29.4" y2="40.5" stroke-width="1.2"/>
<line x1="19.0" y1="32.9" x2="25.0" y2="43.3" stroke-width="3.2"/>
<line x1="18.3" y1="41.1" x2="20.3" y2="45.7" stroke-width="1.2"/>
<line x1="13.9" y1="42.8" x2="15.5" y2="47.6" stroke-width="1.2"/>
<line x1="9.4" y1="44.0" x2="10.4" y2="48.9" stroke-width="1.2"/>
<line x1="4.7" y1="44.8" x2="5.2" y2="49.7" stroke-width="1.2"/>
<line x1="0.0" y1="38.0" x2="0.0" y2="50.0" stroke-width="3.2"/>
<line x1="-4.7" y1="44.8" x2="-5.2" y2="49.7" stroke-width="1.2"/>
<line x1="-9.4" y1="44.0" x2="-10.4" y2="48.9" stroke-width="1.2"/>
<line x1="-13.9" y1="42.8" x2="-15.5" y2="47.6" stroke-width="1.2"/>
<line x1="-18.3" y1="41.1" x2="-20.3" y2="45.7" stroke-width="1.2"/>
<line x1="-19.0" y1="32.9" x2="-25.0" y2="43.3" stroke-width="3.2"/>
<line x1="-26.5" y1="36.4" x2="-29.4" y2="40.5" stroke-width="1.2"/>
<line x1="-30.1" y1="33.4" x2="-33.5" y2="37.2" stroke-width="1.2"/>
<line x1="-33.4" y1="30.1" x2="-37.2" y2="33.5" stroke-width="1.2"/>
<line x1="-36.4" y1="26.5" x2="-40.5" y2="29.4" stroke-width="1.2"/>
<line x1="-32.9" y1="19.0" x2="-43.3" y2="25.0" stroke-width="3.2"/>
<line x1="-41.1" y1="18.3" x2="-45.7" y2="20.3" stroke-width="1.2"/>
<line x1="-42.8" y1="13.9" x2="-47.6" y2="15.5" stroke-width="1.2"/>
<line x1="-44.0" y1="9.4" x2="-48.9" y2="10.4" stroke-width="1.2"/>
<line x1="-44.8" y1="4.7" x2="-49.7" y2="5.2" stroke-width="1.2"/>
<line x1="-38.0" y1="0.0" x2="-50.0" y2="0.0" stroke-width="3.2"/>
<line x1="-44.8" y1="-4.7" x2="-49.7" y2="-5.2" stroke-width="1.2"/>
<line x1="-44.0" y1="-9.4" x2="-48.9" y2="-10.4" stroke-width="1.2"/>
<line x1="-42.8" y1="-13.9" x2="-47.6" y2="-15.5" stroke-width="1.2"/>
<line x1="-41.1" y1="-18.3" x2="-45.7" y2="-20.3" stroke-width="1.2"/>
<line x1="-32.9" y1="-19.0" x2="-43.3" y2="-25.0" stroke-width="3.2"/>
<line x1="-36.4" y1="-26.5" x2="-40.5" y2="-29.4" stroke-width="1.2"/>
<line x1="-33.4" y1="-30.1" x2="-37.2" y2="-33.5" stroke-width="1.2"/>
<line x1="-30.1" y1="-33.4" x2="-33.5" y2="-37.2" stroke-width="1.2"/>
<line x1="-26.5" y1="-36.4" x2="-29.4" y2="-40.5" stroke-width="1.2"/>
<line x1="-19.0" y1="-32.9" x2="-25.0" y2="-43.3" stroke-width="3.2"/>
<line x1="-18.3" y1="-41.1" x2="-20.3" y2="-45.7" stroke-width="1.2"/>
<line x1="-13.9" y1="-42.8" x2="-15.5" y2="-47.6" stroke-width="1.2"/>
<line x1="-9.4" y1="-44.0" x2="-10.4" y2="-48.9" stroke-width="1.2"/>
<line x1="-4.7" y1="-44.8" x2="-5.2" y2="-49.7" stroke-width="1.2"/>
<line x1="-50" y1="0" x2="-40" y2="0" stroke-width="3" stroke="#2a1e1e"/><line x1="-40" y1="0" x2="13" y2="0" stroke-width="4.6" stroke="#2a1e1e"/>
<path d="M-17 -50L-12.5 -50.5 7 14 3 15z" fill="#2a1e1e" stroke="none"/>
<line x1="-40" y1="38" x2="17" y2="-17" stroke-width="0.8"/>
<circle r="1.5" fill="#151515"/>
</g>
<text x="64" y="87" font-family="Liberation Sans" font-size="10" text-anchor="middle" fill="#111">GMT</text>
</svg>

<!-- second window (behind) -->
<div class="a" style="left:1300px;top:78px;width:67px;height:650px;border-radius:0 6px 6px 0;background:linear-gradient(90deg,#f2dcea,#f8e8f2);border:1px solid #4a3a45"></div>
<div class="a" style="left:1300px;top:79px;width:61px;height:18px;border:1px solid #8a7a85;border-top:none;border-radius:0 0 4px 4px;background:linear-gradient(#f8ecf4,#eedce8)"></div>
<svg class="a" style="left:1334px;top:82px" width="10" height="10"><path d="M1 1L9 9M9 1L1 9" stroke="#6a6068" stroke-width="2.2"/></svg>
<div class="a" style="left:1300px;top:113px;width:58px;height:22px;background:#fff;border:1px solid #b8b0b8"></div>
<svg class="a" style="left:1340px;top:116px" width="16" height="16"><circle cx="9" cy="6.5" r="4.2" fill="none" stroke="#2a5fa6" stroke-width="2"/><path d="M6 9.5L2 14" stroke="#2a5fa6" stroke-width="2.4"/></svg>
<div class="a" style="left:1300px;top:142px;width:60px;height:586px;background:#fff;border:1px solid #8a8a95;border-bottom:none"></div>
<div class="a" style="left:1301px;top:143px;width:59px;height:31px;background:linear-gradient(#fbfcfe,#dde6f2)"></div>
<div class="a" style="left:1332px;top:151px;width:14px;height:14px;border-radius:50%;background:#34518f;border:1px solid #1c2e5c;color:#fff;font-weight:bold;font-size:10px;text-align:center;line-height:12px">?</div>
<div class="a" style="left:1301px;top:668px;width:59px;height:53px;background:#eef2fa;border-top:1px solid #c9d5e8"></div>
<div class="a" style="left:1301px;top:721px;width:59px;height:7px;background:#f5e2ee;border-top:1px solid #6a5a65"></div>

<!-- ============ MAIN WINDOW ============ -->
<div id="win" class="a"></div>
<div class="t" style="left:346px;top:34px;font-size:12px;color:#111">Менеджер контента v3.6</div>

<!-- title icon + controls -->
<svg class="a" style="left:325px;top:32px" width="17" height="17" viewBox="0 0 34 32">
<rect x="14" y="0.8" width="6" height="4" fill="#1f5a5a"/>
<circle cx="17" cy="16" r="13.6" fill="#1f5d5d"/>
<circle cx="17" cy="16" r="9" fill="none" stroke="#2f7a78" stroke-width="1.8"/>
<circle cx="17" cy="16" r="5.5" fill="#173c3c"/>
<circle cx="17" cy="16.2" r="2.6" fill="#f2f4f4"/>
<rect x="1" y="21.8" width="32" height="9.8" fill="#141818"/>
<path d="M9 31.6Q9 23 17 22Q25 23 25 31.6" fill="#3a3f3f"/>
</svg>
<div class="a" style="left:1225px;top:25px;width:29px;height:20px;border:1px solid #5a4a55;border-top:none;border-right:none;border-radius:0 0 0 5px;background:linear-gradient(#f6e8f0 0%,#ecd8e4 45%,#d4bccb 50%,#e2cdd9 100%)"></div>
<div class="a" style="left:1254px;top:25px;width:27px;height:20px;border-left:1px solid #5a4a55;border-bottom:1px solid #5a4a55;background:linear-gradient(#f6e8f0 0%,#ecd8e4 45%,#d4bccb 50%,#e2cdd9 100%)"></div>
<div class="a" style="left:1280px;top:25px;width:48px;height:20px;border:1px solid #5a3a35;border-top:none;border-radius:0 0 5px 0;background:linear-gradient(#f0a898 0%,#e07a66 45%,#c83a22 52%,#d45a40 80%,#e8907a 100%)"></div>
<div class="a" style="left:1234px;top:35px;width:12px;height:5px;border:1px solid #3a3a3a;background:#fff;border-radius:1px"></div>
<div class="a" style="left:1261px;top:30px;width:12px;height:10px;border:1px solid #3a3a3a;background:#fff;border-radius:1px"><div class="a" style="left:2px;top:2px;width:6px;height:4px;border:1px solid #3a3a3a;background:#ddd"></div></div>
<svg class="a" style="left:1297px;top:29px" width="14" height="13" viewBox="0 0 14 13"><path d="M2 1.5L12 11.5M12 1.5L2 11.5" stroke="#3a2a2a" stroke-width="4"/><path d="M2 1.5L12 11.5M12 1.5L2 11.5" stroke="#fff" stroke-width="2.4"/></svg>
<div id="client" class="a"></div>
<div class="a menu"></div>
<div class="t mi" style="left:332px">Файл</div>
<div class="t mi" style="left:375px">Редактировать</div>
<div class="t mi" style="left:469px">Просмотр</div>
<div class="t mi" style="left:540px">Помощь</div>


<!-- ============ LEFT PANE ============ -->
<div class="a" style="left:325px;top:75px;width:1px;height:716px;background:#9a9a9a"></div>
<div class="a" style="left:326px;top:75px;width:1px;height:716px;background:#666"></div>
<!-- panel 1 -->
<div class="gline" style="top:75px"></div>
<div class="hdr" style="left:326px;top:77px;width:296px"></div>
<div class="ball" style="left:331px;top:82px"></div>
<div class="t" style="left:357px;top:85px;color:#fff">Загрузка</div>
<div class="chev" style="left:604px;top:82px"><svg width="13" height="13" viewBox="0 0 13 13"><path d="M3.5 3.5l3 2.5 3-2.5M3.5 6.5l3 2.5 3-2.5" fill="none" stroke="#1c2f9c" stroke-width="1.6"/></svg></div>
<div class="a" style="left:326px;top:101px;width:296px;height:141px;background:#f0f0f0"></div>
<div class="t" style="left:329px;top:110px;line-height:13px;white-space:pre">Чтобы получить доступ к станции загрузки Trainz и
панели ассистента загрузки, вы должны ввести
действующее имя пользователя вместе с серийным
номером Trainz Simulator 2009. Пожалуйста,
убедитесь, что вы ввели все данные правильно.
Выберите пункт Настройки &gt; Интернет, чтобы
подтвердить введенные данные.</div>
<div class="sb" style="left:605px;top:101px;height:141px"></div>
<div class="up" style="left:609px;top:108px"></div>
<div class="thumb" style="left:606px;top:120px;height:62px"></div><div class="a" style="left:609px;top:148px;width:7px;height:6px;border-top:1px solid #555;border-bottom:1px solid #555"><div class="a" style="left:0;top:1.5px;width:7px;height:1px;background:#555"></div></div>
<div class="dn" style="left:609px;top:231px"></div>
<div class="pline" style="top:242px"></div>
<div class="a" style="left:621px;top:101px;width:1px;height:141px;background:#000"></div>

<!-- panel 2 -->
<div class="gline" style="top:247px"></div>
<div class="hdr" style="left:326px;top:249px;width:296px"></div>
<div class="ball ballg" style="left:331px;top:254px"></div>
<div class="t" style="left:357px;top:257px;color:#fff">Поиск</div>
<div class="chev" style="left:404px;top:254px"><svg width="13" height="13" viewBox="0 0 13 13"><path d="M5 3.5l3.5 3-3.5 3z" fill="#1c2f9c"/></svg></div>
<div class="chev" style="left:604px;top:254px"><svg width="13" height="13" viewBox="0 0 13 13"><path d="M3.5 3.5l3 2.5 3-2.5M3.5 6.5l3 2.5 3-2.5" fill="none" stroke="#1c2f9c" stroke-width="1.6"/></svg></div>
<div class="a" style="left:326px;top:273px;width:296px;height:141px;background:#f0f0f0"></div>
<div class="a" style="left:330px;top:277px;width:262px;height:18px;background:#fff;border-top:2px solid #828282;border-left:2px solid #828282;border-bottom:1px solid #e3e3e3;border-right:1px solid #e3e3e3"></div>
<div class="btn" style="left:330px;top:304px;width:26px;height:20px"><div class="ball" style="left:6px;top:2px;width:14px;height:14px;background:radial-gradient(circle at 50% 30%,#fff 0%,#e0e0e0 35%,#9a9a9a 75%,#555 100%)"></div></div>
<div class="a" style="left:363px;top:304px;width:111px;height:20px;background:#fff;border-top:2px solid #828282;border-left:2px solid #828282;border-bottom:1px solid #e3e3e3;border-right:1px solid #e3e3e3"></div>
<div class="t" style="left:366px;top:309px">KUID дополнения</div>
<div class="btn" style="left:457px;top:306px;width:16px;height:17px"><svg style="position:absolute;left:3px;top:5px" width="9" height="6"><path d="M0 0h9l-4.5 5z" fill="#000"/></svg></div>
<div class="a" style="left:477px;top:304px;width:92px;height:20px;background:#fff;border-top:2px solid #828282;border-left:2px solid #828282;border-bottom:1px solid #e3e3e3;border-right:1px solid #e3e3e3;overflow:hidden"><div class="t" style="left:4px;top:3px">&lt;kuid2:61599:50410:1&gt;</div></div>
<div class="btn" style="left:573px;top:304px;width:26px;height:20px;line-height:17px">-</div>
<div class="btn" style="left:570px;top:339px;width:26px;height:20px;line-height:18px;font-size:13px">+</div>
<div class="btn" style="left:331px;top:363px;width:83px;height:23px;line-height:21px">Очистить</div>
<div class="btn" style="left:422px;top:363px;width:83px;height:23px;line-height:21px"><u style="text-decoration:none;border-bottom:1px solid #000">С</u>охранить</div>
<div class="btn" style="left:513px;top:363px;width:83px;height:23px;line-height:21px">Применить</div>
<div class="sb" style="left:605px;top:273px;height:141px"></div>
<div class="up" style="left:609px;top:280px"></div>
<div class="thumb" style="left:606px;top:292px;height:89px"></div><div class="a" style="left:609px;top:333px;width:7px;height:6px;border-top:1px solid #555;border-bottom:1px solid #555"><div class="a" style="left:0;top:1.5px;width:7px;height:1px;background:#555"></div></div>
<div class="dn" style="left:609px;top:403px"></div>
<div class="pline" style="top:414px"></div>
<div class="a" style="left:621px;top:273px;width:1px;height:141px;background:#000"></div>

<!-- panel 3 -->
<div class="gline" style="top:419px"></div>
<div class="hdr" style="left:326px;top:421px;width:296px"></div>
<div class="ball" style="left:331px;top:426px"></div>
<div class="a" style="left:357px;top:421px;width:247px;height:24px;overflow:hidden"><div class="t" style="left:0;top:8px;color:#fff;letter-spacing:-0.17px">Подробная информация о выбранном дополнении</div></div>
<div class="chev" style="left:604px;top:426px"><svg width="13" height="13" viewBox="0 0 13 13"><path d="M3.5 3.5l3 2.5 3-2.5M3.5 6.5l3 2.5 3-2.5" fill="none" stroke="#1c2f9c" stroke-width="1.6"/></svg></div>
<div class="a" style="left:326px;top:445px;width:296px;height:141px;background:#f0f0f0"></div>
<div class="btn" style="left:327px;top:446px;width:20px;height:18px;color:#8a8a8a;line-height:16px;background:#f0f0f0">&lt;</div>
<div class="btn" style="left:583px;top:446px;width:20px;height:18px;color:#8a8a8a;line-height:16px;background:#f0f0f0">&gt;</div>
<div class="t" style="left:402px;top:450px;letter-spacing:0.15px">Выбран объект 1 из 0.</div>
<div class="t" style="left:379px;top:510px">Нет выбранных дополнений.</div>
<div class="sb" style="left:605px;top:445px;height:141px"></div>
<div class="up" style="left:609px;top:452px"></div>
<div class="thumb" style="left:606px;top:464px;height:16px"></div><div class="a" style="left:609px;top:469px;width:7px;height:6px;border-top:1px solid #555;border-bottom:1px solid #555"><div class="a" style="left:0;top:1.5px;width:7px;height:1px;background:#555"></div></div>
<div class="dn" style="left:609px;top:575px"></div>
<div class="pline" style="top:586px"></div>
<div class="a" style="left:621px;top:445px;width:1px;height:141px;background:#000"></div>

<!-- panel 4 -->
<div class="gline" style="top:591px"></div>
<div class="hdr" style="left:326px;top:593px;width:296px"></div>
<div class="ball" style="left:331px;top:598px"></div>
<div class="t" style="left:357px;top:601px;color:#fff">Архиватор</div>
<div class="chev" style="left:434px;top:598px"><svg width="13" height="13" viewBox="0 0 13 13"><path d="M5 3.5l3.5 3-3.5 3z" fill="#1c2f9c"/></svg></div>
<div class="chev" style="left:604px;top:598px"><svg width="13" height="13" viewBox="0 0 13 13"><path d="M3.5 3.5l3 2.5 3-2.5M3.5 6.5l3 2.5 3-2.5" fill="none" stroke="#1c2f9c" stroke-width="1.6"/></svg></div>
<div class="a" style="left:326px;top:617px;width:296px;height:124px;background:#f0f0f0"></div>
<div class="t" style="left:332px;top:624px;font-size:17px;font-weight:bold">Архиватор</div>
<div class="t" style="left:560px;top:627px">Пусто</div>
<div class="a" style="left:328px;top:645px;width:271px;height:58px;background:#fff;border-top:2px solid #828282;border-left:2px solid #828282;border-bottom:1px solid #e3e3e3;border-right:1px solid #e3e3e3"></div>
<div class="t" style="left:378px;top:680px;letter-spacing:0.14px">Нет объектов для отображения.</div>
<div class="btn" style="left:349px;top:711px;width:113px;height:23px;line-height:21px;color:#a0a0a0">Архив</div>
<div class="btn" style="left:472px;top:711px;width:113px;height:23px;line-height:21px;color:#a0a0a0">Очистить</div>
<div class="sb" style="left:605px;top:617px;height:124px"></div>
<div class="up" style="left:609px;top:624px"></div>
<div class="thumb" style="left:606px;top:636px;height:77px"></div><div class="a" style="left:609px;top:671px;width:7px;height:6px;border-top:1px solid #555;border-bottom:1px solid #555"><div class="a" style="left:0;top:1.5px;width:7px;height:1px;background:#555"></div></div>
<div class="dn" style="left:609px;top:730px"></div>
<div class="pline" style="top:741px"></div>
<div class="a" style="left:621px;top:617px;width:1px;height:124px;background:#000"></div>

<!-- gray headers -->
<div class="hdrg" style="left:326px;top:742px;width:296px"></div>
<div class="ball" style="left:331px;top:748px;width:13px;height:13px"></div>
<div class="t" style="left:357px;top:750px;color:#fff">Выгрузка</div>
<div class="chev" style="left:604px;top:748px"><svg width="13" height="13" viewBox="0 0 13 13"><path d="M3.5 6.5l3-2.5 3 2.5M3.5 9.5l3-2.5 3 2.5" fill="none" stroke="#1c2f9c" stroke-width="1.6"/></svg></div>
<div class="hdrg" style="left:326px;top:767px;width:296px"></div>
<div class="ball" style="left:331px;top:773px;width:13px;height:13px"></div>
<div class="t" style="left:357px;top:775px;color:#fff">Отборочный список</div>
<div class="chev" style="left:604px;top:773px"><svg width="13" height="13" viewBox="0 0 13 13"><path d="M3.5 6.5l3-2.5 3 2.5M3.5 9.5l3-2.5 3 2.5" fill="none" stroke="#1c2f9c" stroke-width="1.6"/></svg></div>

<!-- ============ RIGHT PANE ============ -->
<div class="a" style="left:622px;top:75px;width:5px;height:716px;background:#f7f7f7"></div>
<div class="a" style="left:627px;top:75px;width:696px;height:710px;border:2px solid #777;border-right-color:#777;background:#f0f0f0"></div>
<div class="a" style="left:629px;top:77px;width:692px;height:706px;border:1px solid #5c5c5c;border-right-color:#fff;border-bottom-color:#fff"></div>
<div class="hdr" style="left:630px;top:78px;width:692px;height:25px"></div>
<div class="a" style="left:630px;top:103px;width:692px;height:1px;background:#00103a"></div>
<div class="a" style="left:630px;top:104px;width:692px;height:2px;background:#fff"></div>
<div class="t" style="left:663px;top:86px;color:#fff">Дополнения (текст)</div>
<div class="chev" style="left:928px;top:84px"><svg width="13" height="13" viewBox="0 0 13 13"><path d="M5 3.5l3.5 3-3.5 3z" fill="#1c2f9c"/></svg></div>
<div class="chev" style="left:1299px;top:84px;color:#1c2f9c;font-weight:bold;font-size:11px;text-align:center;line-height:13px">?</div>
<div class="tab" style="left:634px;top:107px;width:185px;height:20px;line-height:18px;">Избранные локомотивы</div>
<div class="tab" style="left:819px;top:107px;width:136px;height:20px;line-height:18px;">Установленные</div>
<div class="tab" style="left:955px;top:107px;width:163px;height:20px;line-height:18px;">Отредактированные</div>
<div class="tab" style="left:1118px;top:107px;width:203px;height:20px;line-height:18px;">С отсутствующими связями</div>
<div class="tab" style="left:634px;top:128px;width:153px;height:18px;line-height:16px;">Мой контент</div>
<div class="tab" style="left:787px;top:128px;width:254px;height:18px;line-height:16px;">Открытые для редактирования</div>
<div class="tab" style="left:1041px;top:128px;width:150px;height:18px;line-height:16px;">Обновления</div>
<div class="tab" style="left:1191px;top:128px;width:130px;height:18px;line-height:16px;">Сегодня</div>
<div class="tab" style="left:632px;top:147px;width:159px;height:23px;line-height:21px;font-weight:bold;color:#000">Текущий поиск</div>
<div class="tab" style="left:791px;top:147px;width:104px;height:23px;line-height:21px;">Все</div>
<div class="tab" style="left:895px;top:147px;width:113px;height:23px;line-height:21px;">Архивы</div>
<div class="tab" style="left:1008px;top:147px;width:149px;height:23px;line-height:21px;">Отключенные</div>
<div class="tab" style="left:1157px;top:147px;width:164px;height:23px;line-height:21px;">Станция загрузки</div>
<!-- list -->
<div class="a" style="left:636px;top:172px;width:682px;height:608px;background:#fff;border:1px solid #6a6a6a;border-right-color:#9a9a9a"></div>
<div class="a" style="left:637px;top:173px;width:680px;height:18px;background:#efefef;border-top:1px solid #fff"></div>
<div class="a" style="left:637px;top:191px;width:680px;height:2px;background:#7a7a7a"></div>
<div class="a" style="left:685px;top:174px;width:2px;height:17px;background:#7a7a7a"></div>
<div class="a" style="left:895px;top:174px;width:2px;height:17px;background:#7a7a7a"></div>
<div class="a" style="left:1195px;top:174px;width:2px;height:17px;background:#7a7a7a"></div>
<div class="t lt" style="left:643px;top:177px">Тип</div>
<div class="t lt" style="left:693px;top:177px">Статус</div>
<div class="t lt" style="left:903px;top:177px">Имя</div>
<div class="t lt" style="left:1203px;top:177px">Автор</div>
<div class="a" style="left:637px;top:194px;width:680px;height:33px;background:#fff"></div>
<div class="ic misc" style="left:641px;top:194px">MISC</div>
<div class="ic ion" style="left:687px;top:194px"><svg width="30" height="30" viewBox="0 0 30 30"><path d="M11.3 2.7L24 8.4 23.6 20.2 11.8 14.5z" fill="#161616"/><path d="M12.6 4.6L22.8 9.2 22.5 18.6 13 14z" fill="#2c2c2c"/><path d="M11.8 14.5L3.9 21 17 27.6 23.6 20.2z" fill="#8a8a8a"/><path d="M10.5 17L6.8 20.5 16.5 25.5 20.5 21z" fill="#3e3e3e"/><path d="M3.9 21L17 27.6V28.8L3.9 22.2z" fill="#5a5a5a"/></svg></div>
<div class="ic ioff" style="left:721px;top:194px"><svg width="30" height="30" viewBox="0 0 30 30"><circle cx="15" cy="15" r="12.5" fill="#fbfcff" stroke="#e6eaf0" stroke-width="1"/><circle cx="15" cy="15" r="4.5" fill="#cddcec"/><circle cx="15" cy="15" r="1" fill="#e9eef5"/></svg></div>
<div class="ic ioff" style="left:755px;top:194px"><svg width="30" height="30" viewBox="0 0 30 30"><path d="M15 6L24 22.5H6z" fill="none" stroke="#d3e6cd" stroke-width="2.4" stroke-linejoin="miter"/></svg></div>
<div class="ic ion" style="left:789px;top:194px"><svg width="30" height="30" viewBox="0 0 30 30"><path d="M10 8.5L25.5 25" stroke="#111" stroke-width="3.4"/><path d="M2.5 10L7 5.2 11.2 3.4 15.8 4.6 14 6.6 11 7.4 7.8 11.4 5.2 13.4z" fill="#111"/><path d="M22 7.8L7.6 22.8" stroke="#111" stroke-width="3"/><path d="M26.8 6.8A3.3 3.3 0 1 1 23.2 3.2" fill="none" stroke="#111" stroke-width="2.6"/><path d="M2.5 22.5A3.3 3.3 0 1 1 6.1 26.1" fill="none" stroke="#111" stroke-width="2.6"/></svg></div>
<div class="ic ioff" style="left:823px;top:194px"><svg width="30" height="30" viewBox="0 0 30 30"><path d="M5.5 5.5h11v4" fill="none" stroke="#d6d6d6" stroke-width="1.3"/><path d="M5.5 5.5v11h4" fill="none" stroke="#d6d6d6" stroke-width="1.3"/><rect x="10.5" y="10" width="14" height="14" fill="#c4c4c4"/></svg></div>
<div class="ic ioff" style="left:857px;top:194px"><svg width="30" height="30" viewBox="0 0 30 30"><path d="M10.8 4.8Q14.6 3.5 18.4 4.8L15.8 19.4h-2.4z" fill="#f5c2c2"/><circle cx="14.6" cy="23.3" r="2.9" fill="#f3bcbc"/></svg></div>
<div class="t lt" style="left:903px;top:205px">corona yellow</div>
<div class="t lt" style="left:1203px;top:205px">hummus2</div>
<div class="a" style="left:637px;top:227px;width:680px;height:33px;background:#f7f7f7"></div>
<div class="ic misc" style="left:641px;top:227px">MISC</div>
<div class="ic ion" style="left:687px;top:227px"><svg width="30" height="30" viewBox="0 0 30 30"><path d="M11.3 2.7L24 8.4 23.6 20.2 11.8 14.5z" fill="#161616"/><path d="M12.6 4.6L22.8 9.2 22.5 18.6 13 14z" fill="#2c2c2c"/><path d="M11.8 14.5L3.9 21 17 27.6 23.6 20.2z" fill="#8a8a8a"/><path d="M10.5 17L6.8 20.5 16.5 25.5 20.5 21z" fill="#3e3e3e"/><path d="M3.9 21L17 27.6V28.8L3.9 22.2z" fill="#5a5a5a"/></svg></div>
<div class="ic ioff" style="left:721px;top:227px"><svg width="30" height="30" viewBox="0 0 30 30"><circle cx="15" cy="15" r="12.5" fill="#fbfcff" stroke="#e6eaf0" stroke-width="1"/><circle cx="15" cy="15" r="4.5" fill="#cddcec"/><circle cx="15" cy="15" r="1" fill="#e9eef5"/></svg></div>
<div class="ic ioff" style="left:755px;top:227px"><svg width="30" height="30" viewBox="0 0 30 30"><path d="M15 6L24 22.5H6z" fill="none" stroke="#d3e6cd" stroke-width="2.4" stroke-linejoin="miter"/></svg></div>
<div class="ic ion" style="left:789px;top:227px"><svg width="30" height="30" viewBox="0 0 30 30"><path d="M10 8.5L25.5 25" stroke="#111" stroke-width="3.4"/><path d="M2.5 10L7 5.2 11.2 3.4 15.8 4.6 14 6.6 11 7.4 7.8 11.4 5.2 13.4z" fill="#111"/><path d="M22 7.8L7.6 22.8" stroke="#111" stroke-width="3"/><path d="M26.8 6.8A3.3 3.3 0 1 1 23.2 3.2" fill="none" stroke="#111" stroke-width="2.6"/><path d="M2.5 22.5A3.3 3.3 0 1 1 6.1 26.1" fill="none" stroke="#111" stroke-width="2.6"/></svg></div>
<div class="ic ioff" style="left:823px;top:227px"><svg width="30" height="30" viewBox="0 0 30 30"><path d="M5.5 5.5h11v4" fill="none" stroke="#d6d6d6" stroke-width="1.3"/><path d="M5.5 5.5v11h4" fill="none" stroke="#d6d6d6" stroke-width="1.3"/><rect x="10.5" y="10" width="14" height="14" fill="#c4c4c4"/></svg></div>
<div class="ic ioff" style="left:857px;top:227px"><svg width="30" height="30" viewBox="0 0 30 30"><path d="M10.8 4.8Q14.6 3.5 18.4 4.8L15.8 19.4h-2.4z" fill="#f5c2c2"/><circle cx="14.6" cy="23.3" r="2.9" fill="#f3bcbc"/></svg></div>
<div class="t lt" style="left:903px;top:238px">CSD 475.101</div>
<div class="t lt" style="left:1203px;top:238px">hummus2</div>
<div class="a" style="left:637px;top:260px;width:680px;height:33px;background:#fff"></div>
<div class="ic misc" style="left:641px;top:260px">MISC</div>
<div class="ic ion" style="left:687px;top:260px"><svg width="30" height="30" viewBox="0 0 30 30"><path d="M11.3 2.7L24 8.4 23.6 20.2 11.8 14.5z" fill="#161616"/><path d="M12.6 4.6L22.8 9.2 22.5 18.6 13 14z" fill="#2c2c2c"/><path d="M11.8 14.5L3.9 21 17 27.6 23.6 20.2z" fill="#8a8a8a"/><path d="M10.5 17L6.8 20.5 16.5 25.5 20.5 21z" fill="#3e3e3e"/><path d="M3.9 21L17 27.6V28.8L3.9 22.2z" fill="#5a5a5a"/></svg></div>
<div class="ic ioff" style="left:721px;top:260px"><svg width="30" height="30" viewBox="0 0 30 30"><circle cx="15" cy="15" r="12.5" fill="#fbfcff" stroke="#e6eaf0" stroke-width="1"/><circle cx="15" cy="15" r="4.5" fill="#cddcec"/><circle cx="15" cy="15" r="1" fill="#e9eef5"/></svg></div>
<div class="ic ioff" style="left:755px;top:260px"><svg width="30" height="30" viewBox="0 0 30 30"><path d="M15 6L24 22.5H6z" fill="none" stroke="#d3e6cd" stroke-width="2.4" stroke-linejoin="miter"/></svg></div>
<div class="ic ion" style="left:789px;top:260px"><svg width="30" height="30" viewBox="0 0 30 30"><path d="M10 8.5L25.5 25" stroke="#111" stroke-width="3.4"/><path d="M2.5 10L7 5.2 11.2 3.4 15.8 4.6 14 6.6 11 7.4 7.8 11.4 5.2 13.4z" fill="#111"/><path d="M22 7.8L7.6 22.8" stroke="#111" stroke-width="3"/><path d="M26.8 6.8A3.3 3.3 0 1 1 23.2 3.2" fill="none" stroke="#111" stroke-width="2.6"/><path d="M2.5 22.5A3.3 3.3 0 1 1 6.1 26.1" fill="none" stroke="#111" stroke-width="2.6"/></svg></div>
<div class="ic ioff" style="left:823px;top:260px"><svg width="30" height="30" viewBox="0 0 30 30"><path d="M5.5 5.5h11v4" fill="none" stroke="#d6d6d6" stroke-width="1.3"/><path d="M5.5 5.5v11h4" fill="none" stroke="#d6d6d6" stroke-width="1.3"/><rect x="10.5" y="10" width="14" height="14" fill="#c4c4c4"/></svg></div>
<div class="ic ioff" style="left:857px;top:260px"><svg width="30" height="30" viewBox="0 0 30 30"><path d="M10.8 4.8Q14.6 3.5 18.4 4.8L15.8 19.4h-2.4z" fill="#f5c2c2"/><circle cx="14.6" cy="23.3" r="2.9" fill="#f3bcbc"/></svg></div>
<div class="t lt" style="left:903px;top:271px">CSD 475.101 tender</div>
<div class="t lt" style="left:1203px;top:271px">hummus2</div>
<div class="a" style="left:637px;top:293px;width:680px;height:33px;background:#f7f7f7"></div>
<div class="ic misc" style="left:641px;top:293px">MISC</div>
<div class="ic ion" style="left:687px;top:293px"><svg width="30" height="30" viewBox="0 0 30 30"><path d="M11.3 2.7L24 8.4 23.6 20.2 11.8 14.5z" fill="#161616"/><path d="M12.6 4.6L22.8 9.2 22.5 18.6 13 14z" fill="#2c2c2c"/><path d="M11.8 14.5L3.9 21 17 27.6 23.6 20.2z" fill="#8a8a8a"/><path d="M10.5 17L6.8 20.5 16.5 25.5 20.5 21z" fill="#3e3e3e"/><path d="M3.9 21L17 27.6V28.8L3.9 22.2z" fill="#5a5a5a"/></svg></div>
<div class="ic ioff" style="left:721px;top:293px"><svg width="30" height="30" viewBox="0 0 30 30"><circle cx="15" cy="15" r="12.5" fill="#fbfcff" stroke="#e6eaf0" stroke-width="1"/><circle cx="15" cy="15" r="4.5" fill="#cddcec"/><circle cx="15" cy="15" r="1" fill="#e9eef5"/></svg></div>
<div class="ic ioff" style="left:755px;top:293px"><svg width="30" height="30" viewBox="0 0 30 30"><path d="M15 6L24 22.5H6z" fill="none" stroke="#d3e6cd" stroke-width="2.4" stroke-linejoin="miter"/></svg></div>
<div class="ic ion" style="left:789px;top:293px"><svg width="30" height="30" viewBox="0 0 30 30"><path d="M10 8.5L25.5 25" stroke="#111" stroke-width="3.4"/><path d="M2.5 10L7 5.2 11.2 3.4 15.8 4.6 14 6.6 11 7.4 7.8 11.4 5.2 13.4z" fill="#111"/><path d="M22 7.8L7.6 22.8" stroke="#111" stroke-width="3"/><path d="M26.8 6.8A3.3 3.3 0 1 1 23.2 3.2" fill="none" stroke="#111" stroke-width="2.6"/><path d="M2.5 22.5A3.3 3.3 0 1 1 6.1 26.1" fill="none" stroke="#111" stroke-width="2.6"/></svg></div>
<div class="ic ioff" style="left:823px;top:293px"><svg width="30" height="30" viewBox="0 0 30 30"><path d="M5.5 5.5h11v4" fill="none" stroke="#d6d6d6" stroke-width="1.3"/><path d="M5.5 5.5v11h4" fill="none" stroke="#d6d6d6" stroke-width="1.3"/><rect x="10.5" y="10" width="14" height="14" fill="#c4c4c4"/></svg></div>
<div class="ic ioff" style="left:857px;top:293px"><svg width="30" height="30" viewBox="0 0 30 30"><path d="M10.8 4.8Q14.6 3.5 18.4 4.8L15.8 19.4h-2.4z" fill="#f5c2c2"/><circle cx="14.6" cy="23.3" r="2.9" fill="#f3bcbc"/></svg></div>
<div class="t lt" style="left:903px;top:304px">kuid2 61599 53475 1</div>
<div class="t lt" style="left:1203px;top:304px">hummus2</div>
<div class="a" style="left:637px;top:326px;width:680px;height:33px;background:#fff"></div>
<div class="ic misc" style="left:641px;top:326px">MISC</div>
<div class="ic ion" style="left:687px;top:326px"><svg width="30" height="30" viewBox="0 0 30 30"><path d="M11.3 2.7L24 8.4 23.6 20.2 11.8 14.5z" fill="#161616"/><path d="M12.6 4.6L22.8 9.2 22.5 18.6 13 14z" fill="#2c2c2c"/><path d="M11.8 14.5L3.9 21 17 27.6 23.6 20.2z" fill="#8a8a8a"/><path d="M10.5 17L6.8 20.5 16.5 25.5 20.5 21z" fill="#3e3e3e"/><path d="M3.9 21L17 27.6V28.8L3.9 22.2z" fill="#5a5a5a"/></svg></div>
<div class="ic ioff" style="left:721px;top:326px"><svg width="30" height="30" viewBox="0 0 30 30"><circle cx="15" cy="15" r="12.5" fill="#fbfcff" stroke="#e6eaf0" stroke-width="1"/><circle cx="15" cy="15" r="4.5" fill="#cddcec"/><circle cx="15" cy="15" r="1" fill="#e9eef5"/></svg></div>
<div class="ic ioff" style="left:755px;top:326px"><svg width="30" height="30" viewBox="0 0 30 30"><path d="M15 6L24 22.5H6z" fill="none" stroke="#d3e6cd" stroke-width="2.4" stroke-linejoin="miter"/></svg></div>
<div class="ic ion" style="left:789px;top:326px"><svg width="30" height="30" viewBox="0 0 30 30"><path d="M10 8.5L25.5 25" stroke="#111" stroke-width="3.4"/><path d="M2.5 10L7 5.2 11.2 3.4 15.8 4.6 14 6.6 11 7.4 7.8 11.4 5.2 13.4z" fill="#111"/><path d="M22 7.8L7.6 22.8" stroke="#111" stroke-width="3"/><path d="M26.8 6.8A3.3 3.3 0 1 1 23.2 3.2" fill="none" stroke="#111" stroke-width="2.6"/><path d="M2.5 22.5A3.3 3.3 0 1 1 6.1 26.1" fill="none" stroke="#111" stroke-width="2.6"/></svg></div>
<div class="ic ioff" style="left:823px;top:326px"><svg width="30" height="30" viewBox="0 0 30 30"><path d="M5.5 5.5h11v4" fill="none" stroke="#d6d6d6" stroke-width="1.3"/><path d="M5.5 5.5v11h4" fill="none" stroke="#d6d6d6" stroke-width="1.3"/><rect x="10.5" y="10" width="14" height="14" fill="#c4c4c4"/></svg></div>
<div class="ic ioff" style="left:857px;top:326px"><svg width="30" height="30" viewBox="0 0 30 30"><path d="M10.8 4.8Q14.6 3.5 18.4 4.8L15.8 19.4h-2.4z" fill="#f5c2c2"/><circle cx="14.6" cy="23.3" r="2.9" fill="#f3bcbc"/></svg></div>
<div class="t lt" style="left:903px;top:337px">kuid2 61599 54475 1</div>
<div class="t lt" style="left:1203px;top:337px">hummus2</div>
<div class="a" style="left:637px;top:359px;width:680px;height:33px;background:#f7f7f7"></div>
<div class="ic misc" style="left:641px;top:359px">MISC</div>
<div class="ic ion" style="left:687px;top:359px"><svg width="30" height="30" viewBox="0 0 30 30"><path d="M11.3 2.7L24 8.4 23.6 20.2 11.8 14.5z" fill="#161616"/><path d="M12.6 4.6L22.8 9.2 22.5 18.6 13 14z" fill="#2c2c2c"/><path d="M11.8 14.5L3.9 21 17 27.6 23.6 20.2z" fill="#8a8a8a"/><path d="M10.5 17L6.8 20.5 16.5 25.5 20.5 21z" fill="#3e3e3e"/><path d="M3.9 21L17 27.6V28.8L3.9 22.2z" fill="#5a5a5a"/></svg></div>
<div class="ic ioff" style="left:721px;top:359px"><svg width="30" height="30" viewBox="0 0 30 30"><circle cx="15" cy="15" r="12.5" fill="#fbfcff" stroke="#e6eaf0" stroke-width="1"/><circle cx="15" cy="15" r="4.5" fill="#cddcec"/><circle cx="15" cy="15" r="1" fill="#e9eef5"/></svg></div>
<div class="ic ioff" style="left:755px;top:359px"><svg width="30" height="30" viewBox="0 0 30 30"><path d="M15 6L24 22.5H6z" fill="none" stroke="#d3e6cd" stroke-width="2.4" stroke-linejoin="miter"/></svg></div>
<div class="ic ion" style="left:789px;top:359px"><svg width="30" height="30" viewBox="0 0 30 30"><path d="M10 8.5L25.5 25" stroke="#111" stroke-width="3.4"/><path d="M2.5 10L7 5.2 11.2 3.4 15.8 4.6 14 6.6 11 7.4 7.8 11.4 5.2 13.4z" fill="#111"/><path d="M22 7.8L7.6 22.8" stroke="#111" stroke-width="3"/><path d="M26.8 6.8A3.3 3.3 0 1 1 23.2 3.2" fill="none" stroke="#111" stroke-width="2.6"/><path d="M2.5 22.5A3.3 3.3 0 1 1 6.1 26.1" fill="none" stroke="#111" stroke-width="2.6"/></svg></div>
<div class="ic ioff" style="left:823px;top:359px"><svg width="30" height="30" viewBox="0 0 30 30"><path d="M5.5 5.5h11v4" fill="none" stroke="#d6d6d6" stroke-width="1.3"/><path d="M5.5 5.5v11h4" fill="none" stroke="#d6d6d6" stroke-width="1.3"/><rect x="10.5" y="10" width="14" height="14" fill="#c4c4c4"/></svg></div>
<div class="ic ioff" style="left:857px;top:359px"><svg width="30" height="30" viewBox="0 0 30 30"><path d="M10.8 4.8Q14.6 3.5 18.4 4.8L15.8 19.4h-2.4z" fill="#f5c2c2"/><circle cx="14.6" cy="23.3" r="2.9" fill="#f3bcbc"/></svg></div>
<div class="t lt" style="left:903px;top:370px">kuid2 61599 55475 1</div>
<div class="t lt" style="left:1203px;top:370px">hummus2</div>
<div class="a" style="left:637px;top:392px;width:680px;height:33px;background:#fff"></div>
<div class="ic misc" style="left:641px;top:392px">MISC</div>
<div class="ic ion" style="left:687px;top:392px"><svg width="30" height="30" viewBox="0 0 30 30"><path d="M11.3 2.7L24 8.4 23.6 20.2 11.8 14.5z" fill="#161616"/><path d="M12.6 4.6L22.8 9.2 22.5 18.6 13 14z" fill="#2c2c2c"/><path d="M11.8 14.5L3.9 21 17 27.6 23.6 20.2z" fill="#8a8a8a"/><path d="M10.5 17L6.8 20.5 16.5 25.5 20.5 21z" fill="#3e3e3e"/><path d="M3.9 21L17 27.6V28.8L3.9 22.2z" fill="#5a5a5a"/></svg></div>
<div class="ic ioff" style="left:721px;top:392px"><svg width="30" height="30" viewBox="0 0 30 30"><circle cx="15" cy="15" r="12.5" fill="#fbfcff" stroke="#e6eaf0" stroke-width="1"/><circle cx="15" cy="15" r="4.5" fill="#cddcec"/><circle cx="15" cy="15" r="1" fill="#e9eef5"/></svg></div>
<div class="ic ioff" style="left:755px;top:392px"><svg width="30" height="30" viewBox="0 0 30 30"><path d="M15 6L24 22.5H6z" fill="none" stroke="#d3e6cd" stroke-width="2.4" stroke-linejoin="miter"/></svg></div>
<div class="ic ion" style="left:789px;top:392px"><svg width="30" height="30" viewBox="0 0 30 30"><path d="M10 8.5L25.5 25" stroke="#111" stroke-width="3.4"/><path d="M2.5 10L7 5.2 11.2 3.4 15.8 4.6 14 6.6 11 7.4 7.8 11.4 5.2 13.4z" fill="#111"/><path d="M22 7.8L7.6 22.8" stroke="#111" stroke-width="3"/><path d="M26.8 6.8A3.3 3.3 0 1 1 23.2 3.2" fill="none" stroke="#111" stroke-width="2.6"/><path d="M2.5 22.5A3.3 3.3 0 1 1 6.1 26.1" fill="none" stroke="#111" stroke-width="2.6"/></svg></div>
<div class="ic ioff" style="left:823px;top:392px"><svg width="30" height="30" viewBox="0 0 30 30"><path d="M5.5 5.5h11v4" fill="none" stroke="#d6d6d6" stroke-width="1.3"/><path d="M5.5 5.5v11h4" fill="none" stroke="#d6d6d6" stroke-width="1.3"/><rect x="10.5" y="10" width="14" height="14" fill="#c4c4c4"/></svg></div>
<div class="ic ioff" style="left:857px;top:392px"><svg width="30" height="30" viewBox="0 0 30 30"><path d="M10.8 4.8Q14.6 3.5 18.4 4.8L15.8 19.4h-2.4z" fill="#f5c2c2"/><circle cx="14.6" cy="23.3" r="2.9" fill="#f3bcbc"/></svg></div>
<div class="t lt" style="left:903px;top:403px">473dummy</div>
<div class="t lt" style="left:1203px;top:403px">hummus2</div>
<div class="a" style="left:637px;top:425px;width:680px;height:33px;background:#f7f7f7"></div>
<div class="ic misc" style="left:641px;top:425px">MISC</div>
<div class="ic ion" style="left:687px;top:425px"><svg width="30" height="30" viewBox="0 0 30 30"><path d="M11.3 2.7L24 8.4 23.6 20.2 11.8 14.5z" fill="#161616"/><path d="M12.6 4.6L22.8 9.2 22.5 18.6 13 14z" fill="#2c2c2c"/><path d="M11.8 14.5L3.9 21 17 27.6 23.6 20.2z" fill="#8a8a8a"/><path d="M10.5 17L6.8 20.5 16.5 25.5 20.5 21z" fill="#3e3e3e"/><path d="M3.9 21L17 27.6V28.8L3.9 22.2z" fill="#5a5a5a"/></svg></div>
<div class="ic ioff" style="left:721px;top:425px"><svg width="30" height="30" viewBox="0 0 30 30"><circle cx="15" cy="15" r="12.5" fill="#fbfcff" stroke="#e6eaf0" stroke-width="1"/><circle cx="15" cy="15" r="4.5" fill="#cddcec"/><circle cx="15" cy="15" r="1" fill="#e9eef5"/></svg></div>
<div class="ic ioff" style="left:755px;top:425px"><svg width="30" height="30" viewBox="0 0 30 30"><path d="M15 6L24 22.5H6z" fill="none" stroke="#d3e6cd" stroke-width="2.4" stroke-linejoin="miter"/></svg></div>
<div class="ic ion" style="left:789px;top:425px"><svg width="30" height="30" viewBox="0 0 30 30"><path d="M10 8.5L25.5 25" stroke="#111" stroke-width="3.4"/><path d="M2.5 10L7 5.2 11.2 3.4 15.8 4.6 14 6.6 11 7.4 7.8 11.4 5.2 13.4z" fill="#111"/><path d="M22 7.8L7.6 22.8" stroke="#111" stroke-width="3"/><path d="M26.8 6.8A3.3 3.3 0 1 1 23.2 3.2" fill="none" stroke="#111" stroke-width="2.6"/><path d="M2.5 22.5A3.3 3.3 0 1 1 6.1 26.1" fill="none" stroke="#111" stroke-width="2.6"/></svg></div>
<div class="ic ioff" style="left:823px;top:425px"><svg width="30" height="30" viewBox="0 0 30 30"><path d="M5.5 5.5h11v4" fill="none" stroke="#d6d6d6" stroke-width="1.3"/><path d="M5.5 5.5v11h4" fill="none" stroke="#d6d6d6" stroke-width="1.3"/><rect x="10.5" y="10" width="14" height="14" fill="#c4c4c4"/></svg></div>
<div class="ic ioff" style="left:857px;top:425px"><svg width="30" height="30" viewBox="0 0 30 30"><path d="M10.8 4.8Q14.6 3.5 18.4 4.8L15.8 19.4h-2.4z" fill="#f5c2c2"/><circle cx="14.6" cy="23.3" r="2.9" fill="#f3bcbc"/></svg></div>
<div class="t lt" style="left:903px;top:436px">474 bogey</div>
<div class="t lt" style="left:1203px;top:436px">hummus2</div>
<div class="a" style="left:637px;top:458px;width:680px;height:33px;background:#fff"></div>
<div class="ic misc" style="left:641px;top:458px">MISC</div>
<div class="ic ion" style="left:687px;top:458px"><svg width="30" height="30" viewBox="0 0 30 30"><path d="M11.3 2.7L24 8.4 23.6 20.2 11.8 14.5z" fill="#161616"/><path d="M12.6 4.6L22.8 9.2 22.5 18.6 13 14z" fill="#2c2c2c"/><path d="M11.8 14.5L3.9 21 17 27.6 23.6 20.2z" fill="#8a8a8a"/><path d="M10.5 17L6.8 20.5 16.5 25.5 20.5 21z" fill="#3e3e3e"/><path d="M3.9 21L17 27.6V28.8L3.9 22.2z" fill="#5a5a5a"/></svg></div>
<div class="ic ioff" style="left:721px;top:458px"><svg width="30" height="30" viewBox="0 0 30 30"><circle cx="15" cy="15" r="12.5" fill="#fbfcff" stroke="#e6eaf0" stroke-width="1"/><circle cx="15" cy="15" r="4.5" fill="#cddcec"/><circle cx="15" cy="15" r="1" fill="#e9eef5"/></svg></div>
<div class="ic ioff" style="left:755px;top:458px"><svg width="30" height="30" viewBox="0 0 30 30"><path d="M15 6L24 22.5H6z" fill="none" stroke="#d3e6cd" stroke-width="2.4" stroke-linejoin="miter"/></svg></div>
<div class="ic ion" style="left:789px;top:458px"><svg width="30" height="30" viewBox="0 0 30 30"><path d="M10 8.5L25.5 25" stroke="#111" stroke-width="3.4"/><path d="M2.5 10L7 5.2 11.2 3.4 15.8 4.6 14 6.6 11 7.4 7.8 11.4 5.2 13.4z" fill="#111"/><path d="M22 7.8L7.6 22.8" stroke="#111" stroke-width="3"/><path d="M26.8 6.8A3.3 3.3 0 1 1 23.2 3.2" fill="none" stroke="#111" stroke-width="2.6"/><path d="M2.5 22.5A3.3 3.3 0 1 1 6.1 26.1" fill="none" stroke="#111" stroke-width="2.6"/></svg></div>
<div class="ic ioff" style="left:823px;top:458px"><svg width="30" height="30" viewBox="0 0 30 30"><path d="M5.5 5.5h11v4" fill="none" stroke="#d6d6d6" stroke-width="1.3"/><path d="M5.5 5.5v11h4" fill="none" stroke="#d6d6d6" stroke-width="1.3"/><rect x="10.5" y="10" width="14" height="14" fill="#c4c4c4"/></svg></div>
<div class="ic ioff" style="left:857px;top:458px"><svg width="30" height="30" viewBox="0 0 30 30"><path d="M10.8 4.8Q14.6 3.5 18.4 4.8L15.8 19.4h-2.4z" fill="#f5c2c2"/><circle cx="14.6" cy="23.3" r="2.9" fill="#f3bcbc"/></svg></div>
<div class="t lt" style="left:903px;top:469px">475</div>
<div class="t lt" style="left:1203px;top:469px">hummus2</div>
<div class="a" style="left:637px;top:491px;width:680px;height:33px;background:#f7f7f7"></div>
<div class="ic misc" style="left:641px;top:491px">MISC</div>
<div class="ic ion" style="left:687px;top:491px"><svg width="30" height="30" viewBox="0 0 30 30"><path d="M11.3 2.7L24 8.4 23.6 20.2 11.8 14.5z" fill="#161616"/><path d="M12.6 4.6L22.8 9.2 22.5 18.6 13 14z" fill="#2c2c2c"/><path d="M11.8 14.5L3.9 21 17 27.6 23.6 20.2z" fill="#8a8a8a"/><path d="M10.5 17L6.8 20.5 16.5 25.5 20.5 21z" fill="#3e3e3e"/><path d="M3.9 21L17 27.6V28.8L3.9 22.2z" fill="#5a5a5a"/></svg></div>
<div class="ic ioff" style="left:721px;top:491px"><svg width="30" height="30" viewBox="0 0 30 30"><circle cx="15" cy="15" r="12.5" fill="#fbfcff" stroke="#e6eaf0" stroke-width="1"/><circle cx="15" cy="15" r="4.5" fill="#cddcec"/><circle cx="15" cy="15" r="1" fill="#e9eef5"/></svg></div>
<div class="ic ioff" style="left:755px;top:491px"><svg width="30" height="30" viewBox="0 0 30 30"><path d="M15 6L24 22.5H6z" fill="none" stroke="#d3e6cd" stroke-width="2.4" stroke-linejoin="miter"/></svg></div>
<div class="ic ion" style="left:789px;top:491px"><svg width="30" height="30" viewBox="0 0 30 30"><path d="M10 8.5L25.5 25" stroke="#111" stroke-width="3.4"/><path d="M2.5 10L7 5.2 11.2 3.4 15.8 4.6 14 6.6 11 7.4 7.8 11.4 5.2 13.4z" fill="#111"/><path d="M22 7.8L7.6 22.8" stroke="#111" stroke-width="3"/><path d="M26.8 6.8A3.3 3.3 0 1 1 23.2 3.2" fill="none" stroke="#111" stroke-width="2.6"/><path d="M2.5 22.5A3.3 3.3 0 1 1 6.1 26.1" fill="none" stroke="#111" stroke-width="2.6"/></svg></div>
<div class="ic ioff" style="left:823px;top:491px"><svg width="30" height="30" viewBox="0 0 30 30"><path d="M5.5 5.5h11v4" fill="none" stroke="#d6d6d6" stroke-width="1.3"/><path d="M5.5 5.5v11h4" fill="none" stroke="#d6d6d6" stroke-width="1.3"/><rect x="10.5" y="10" width="14" height="14" fill="#c4c4c4"/></svg></div>
<div class="ic ioff" style="left:857px;top:491px"><svg width="30" height="30" viewBox="0 0 30 30"><path d="M10.8 4.8Q14.6 3.5 18.4 4.8L15.8 19.4h-2.4z" fill="#f5c2c2"/><circle cx="14.6" cy="23.3" r="2.9" fill="#f3bcbc"/></svg></div>
<div class="t lt" style="left:903px;top:502px">475 bogey</div>
<div class="t lt" style="left:1203px;top:502px">hummus2</div>
<div class="a" style="left:637px;top:524px;width:680px;height:33px;background:#fff"></div>
<div class="ic misc" style="left:641px;top:524px">MISC</div>
<div class="ic ion" style="left:687px;top:524px"><svg width="30" height="30" viewBox="0 0 30 30"><path d="M11.3 2.7L24 8.4 23.6 20.2 11.8 14.5z" fill="#161616"/><path d="M12.6 4.6L22.8 9.2 22.5 18.6 13 14z" fill="#2c2c2c"/><path d="M11.8 14.5L3.9 21 17 27.6 23.6 20.2z" fill="#8a8a8a"/><path d="M10.5 17L6.8 20.5 16.5 25.5 20.5 21z" fill="#3e3e3e"/><path d="M3.9 21L17 27.6V28.8L3.9 22.2z" fill="#5a5a5a"/></svg></div>
<div class="ic ioff" style="left:721px;top:524px"><svg width="30" height="30" viewBox="0 0 30 30"><circle cx="15" cy="15" r="12.5" fill="#fbfcff" stroke="#e6eaf0" stroke-width="1"/><circle cx="15" cy="15" r="4.5" fill="#cddcec"/><circle cx="15" cy="15" r="1" fill="#e9eef5"/></svg></div>
<div class="ic ioff" style="left:755px;top:524px"><svg width="30" height="30" viewBox="0 0 30 30"><path d="M15 6L24 22.5H6z" fill="none" stroke="#d3e6cd" stroke-width="2.4" stroke-linejoin="miter"/></svg></div>
<div class="ic ion" style="left:789px;top:524px"><svg width="30" height="30" viewBox="0 0 30 30"><path d="M10 8.5L25.5 25" stroke="#111" stroke-width="3.4"/><path d="M2.5 10L7 5.2 11.2 3.4 15.8 4.6 14 6.6 11 7.4 7.8 11.4 5.2 13.4z" fill="#111"/><path d="M22 7.8L7.6 22.8" stroke="#111" stroke-width="3"/><path d="M26.8 6.8A3.3 3.3 0 1 1 23.2 3.2" fill="none" stroke="#111" stroke-width="2.6"/><path d="M2.5 22.5A3.3 3.3 0 1 1 6.1 26.1" fill="none" stroke="#111" stroke-width="2.6"/></svg></div>
<div class="ic ioff" style="left:823px;top:524px"><svg width="30" height="30" viewBox="0 0 30 30"><path d="M5.5 5.5h11v4" fill="none" stroke="#d6d6d6" stroke-width="1.3"/><path d="M5.5 5.5v11h4" fill="none" stroke="#d6d6d6" stroke-width="1.3"/><rect x="10.5" y="10" width="14" height="14" fill="#c4c4c4"/></svg></div>
<div class="ic ioff" style="left:857px;top:524px"><svg width="30" height="30" viewBox="0 0 30 30"><path d="M10.8 4.8Q14.6 3.5 18.4 4.8L15.8 19.4h-2.4z" fill="#f5c2c2"/><circle cx="14.6" cy="23.3" r="2.9" fill="#f3bcbc"/></svg></div>
<div class="t lt" style="left:903px;top:535px">476 bogey</div>
<div class="t lt" style="left:1203px;top:535px">hummus2</div>
<div class="a" style="left:637px;top:557px;width:680px;height:33px;background:#f7f7f7"></div>
<div class="ic misc" style="left:641px;top:557px">MISC</div>
<div class="ic ion" style="left:687px;top:557px"><svg width="30" height="30" viewBox="0 0 30 30"><path d="M11.3 2.7L24 8.4 23.6 20.2 11.8 14.5z" fill="#161616"/><path d="M12.6 4.6L22.8 9.2 22.5 18.6 13 14z" fill="#2c2c2c"/><path d="M11.8 14.5L3.9 21 17 27.6 23.6 20.2z" fill="#8a8a8a"/><path d="M10.5 17L6.8 20.5 16.5 25.5 20.5 21z" fill="#3e3e3e"/><path d="M3.9 21L17 27.6V28.8L3.9 22.2z" fill="#5a5a5a"/></svg></div>
<div class="ic ioff" style="left:721px;top:557px"><svg width="30" height="30" viewBox="0 0 30 30"><circle cx="15" cy="15" r="12.5" fill="#fbfcff" stroke="#e6eaf0" stroke-width="1"/><circle cx="15" cy="15" r="4.5" fill="#cddcec"/><circle cx="15" cy="15" r="1" fill="#e9eef5"/></svg></div>
<div class="ic ioff" style="left:755px;top:557px"><svg width="30" height="30" viewBox="0 0 30 30"><path d="M15 6L24 22.5H6z" fill="none" stroke="#d3e6cd" stroke-width="2.4" stroke-linejoin="miter"/></svg></div>
<div class="ic ion" style="left:789px;top:557px"><svg width="30" height="30" viewBox="0 0 30 30"><path d="M10 8.5L25.5 25" stroke="#111" stroke-width="3.4"/><path d="M2.5 10L7 5.2 11.2 3.4 15.8 4.6 14 6.6 11 7.4 7.8 11.4 5.2 13.4z" fill="#111"/><path d="M22 7.8L7.6 22.8" stroke="#111" stroke-width="3"/><path d="M26.8 6.8A3.3 3.3 0 1 1 23.2 3.2" fill="none" stroke="#111" stroke-width="2.6"/><path d="M2.5 22.5A3.3 3.3 0 1 1 6.1 26.1" fill="none" stroke="#111" stroke-width="2.6"/></svg></div>
<div class="ic ioff" style="left:823px;top:557px"><svg width="30" height="30" viewBox="0 0 30 30"><path d="M5.5 5.5h11v4" fill="none" stroke="#d6d6d6" stroke-width="1.3"/><path d="M5.5 5.5v11h4" fill="none" stroke="#d6d6d6" stroke-width="1.3"/><rect x="10.5" y="10" width="14" height="14" fill="#c4c4c4"/></svg></div>
<div class="ic ioff" style="left:857px;top:557px"><svg width="30" height="30" viewBox="0 0 30 30"><path d="M10.8 4.8Q14.6 3.5 18.4 4.8L15.8 19.4h-2.4z" fill="#f5c2c2"/><circle cx="14.6" cy="23.3" r="2.9" fill="#f3bcbc"/></svg></div>
<div class="t lt" style="left:903px;top:568px">935 bogey</div>
<div class="t lt" style="left:1203px;top:568px">hummus2</div>
<!-- hscroll -->
<div class="a" style="left:637px;top:763px;width:680px;height:16px;background:#efefef"></div>
<div class="a" style="left:641px;top:767px;width:0;height:0;border-top:4px solid transparent;border-bottom:4px solid transparent;border-right:4px solid #4a4a4a"></div>
<div class="a" style="left:1306px;top:767px;width:0;height:0;border-top:4px solid transparent;border-bottom:4px solid transparent;border-left:4px solid #4a4a4a"></div>
<div class="a" style="left:654px;top:764px;width:442px;height:14px;border:1px solid #9c9c9c;border-radius:2px;background:linear-gradient(#f4f4f4,#e4e4e4 50%,#cfcfcf)"></div>
<div class="a" style="left:871px;top:767px;width:7px;height:7px;border-left:1px solid #555;border-right:1px solid #555"></div>
<div class="a" style="left:874px;top:767px;width:1px;height:7px;background:#555"></div>

<!-- red bar -->
<div class="a" style="left:325px;top:790px;width:1002px;height:2px;background:#6e6e6e"></div><div class="a" style="left:325px;top:792px;width:1002px;height:2px;background:#fafafa"></div>
<div class="a" style="left:325px;top:794px;width:1003px;height:21px;background:linear-gradient(#ff0a0a 0%,#e80000 45%,#b80000 100%)"></div>
<div class="a" style="left:329px;top:796px;width:17px;height:17px"><svg width="17" height="17" viewBox="0 0 17 17"><path d="M8.5 1a7 6.8 0 1 1-2.5 13.2l-1.5 2.3 0.3-3A7 6.8 0 0 1 8.5 1z" fill="#eef4ff" stroke="#6d8fcf" stroke-width="0.8"/><circle cx="8.5" cy="4.5" r="1.3" fill="#0e2f91"/><path d="M7 7h2.5v5h1v1h-4v-1h1v-4h-0.5z" fill="#0e2f91"/></svg></div>
<div class="t" style="left:355px;top:799px;color:#fff;font-weight:bold;font-size:12.5px;letter-spacing:0.55px">Не удается войти в систему Planet Auran. Пожалуйста, проверьте правильность имени пользователя и пароля.</div>
<!-- status bar -->
<div class="a" style="left:325px;top:818px;width:118px;height:18px;border-top:1px solid #a0a0a0;border-left:1px solid #a0a0a0;background:#efefef"></div>
<div class="a" style="left:445px;top:818px;width:863px;height:18px;border-top:1px solid #a0a0a0;border-left:1px solid #a0a0a0;border-right:1px solid #fff;background:#efefef"></div>
<div class="t" style="left:327px;top:822px;letter-spacing:0.5px">Готово</div>
<div class="a" style="left:930px;top:837px;width:225px;height:6px;background:linear-gradient(90deg,rgba(40,80,170,0),rgba(40,80,170,.45) 15%,rgba(40,80,170,.5) 80%,rgba(40,80,170,0))"></div>
<div class="t" style="left:447px;top:822px;letter-spacing:0.35px">Не выбрано ни одного объекта. Отображено объектов: 12 из 260366 .</div>
<svg class="a" style="left:1313px;top:821px" width="13" height="13"><path d="M12 2L2 12M12 6L6 12M12 10L10 12" stroke="#a8a8a8" stroke-width="1.2"/></svg>

<!-- ============ TASKBAR ============ -->
<div class="a" style="left:0;top:860px;width:1600px;height:40px;background:linear-gradient(90deg,#c59bb6 0px,#d7b0c9 40px,#f2cde4 70px,#f7d6ea 300px,#f8d8ec 900px,#f2cfe4 1200px,#e2bcd3 1340px,#cca5bd 1420px,#c7a0b8 1600px)"></div>
<svg class="a" style="left:850px;top:860px" width="480" height="40" viewBox="850 860 480 40"><path d="M949 860H1155Q1146 872 1158 886Q1166 894 1176 900H1004Q985 878 949 860z" fill="#3858bb" opacity="0.92"/><path d="M1264 860h10q-1 22-15 40h-9q13-18 14-40z" fill="#3d63b0" opacity="0.75"/></svg>
<div class="a" style="left:0;top:860px;width:1600px;height:1px;background:#3a2a33"></div>
<div class="a" style="left:0;top:861px;width:1600px;height:1px;background:rgba(255,255,255,.45)"></div>
<!-- start orb -->
<svg class="a" style="left:7px;top:861px" width="40" height="39" viewBox="0 0 40 39">
<defs><radialGradient id="orb" cx="0.5" cy="0.35" r="0.6"><stop offset="0" stop-color="#8fd0ec"/><stop offset="0.5" stop-color="#2b7fae"/><stop offset="1" stop-color="#0d3a5e"/></radialGradient></defs>
<circle cx="20" cy="19.5" r="18" fill="url(#orb)" stroke="#1a3a55" stroke-width="0.8"/>
<ellipse cx="20" cy="11" rx="13" ry="7" fill="#fff" opacity="0.25"/>
<path d="M10 10q4-2 9 0l-1.5 8q-4-2-9 0z" fill="#f0592a"/>
<path d="M21 10.5q4 2 9 0l-1.5 8q-4 2-9 0z" fill="#7cc142"/>
<path d="M8.2 19.5q4-2 9 0l-1.5 8q-4-2-9 0z" fill="#3a9be0"/>
<path d="M19 20q4 2 9 0l-1.5 8q-4 2-9 0z" fill="#fdc033"/>
<ellipse cx="20" cy="34" rx="10" ry="3" fill="#5ee0ff" opacity="0.4"/>
</svg>
<!-- osk -->
<svg class="a" style="left:72px;top:864px" width="34" height="32" viewBox="0 0 34 32"><path d="M10 2l22 2v18l-22-2z" fill="#e8eaee" stroke="#8a96a6" stroke-width="0.8"/><path d="M12 4l18 1.6v14.8l-18-1.6z" fill="#1c3ec8"/><ellipse cx="21" cy="27" rx="7" ry="3.5" fill="#cfd2d6" stroke="#9aa0a6" stroke-width="0.6"/><rect x="1" y="7" width="20" height="9" rx="1.5" fill="#4aa8e8" stroke="#1d6ab0" stroke-width="0.8"/><g fill="#fff"><rect x="3" y="9" width="2" height="1.5"/><rect x="6" y="9" width="2" height="1.5"/><rect x="9" y="9" width="2" height="1.5"/><rect x="12" y="9" width="2" height="1.5"/><rect x="15" y="9" width="2" height="1.5"/><rect x="3" y="12" width="2" height="1.5"/><rect x="6" y="12" width="2" height="1.5"/><rect x="9" y="12" width="2" height="1.5"/><rect x="12" y="12" width="2" height="1.5"/><rect x="15" y="12" width="3" height="1.5"/></g></svg>
<div class="a" style="left:121px;top:861px;width:60px;height:39px;border:1px solid rgba(60,40,50,.75);border-bottom:none;border-radius:3px 3px 0 0;background:linear-gradient(rgba(255,255,255,.55),rgba(255,255,255,.25));box-shadow:inset 0 0 0 1px rgba(255,255,255,.5)"></div>
<svg class="a" style="left:138px;top:865px" width="26" height="31" viewBox="0 0 26 31"><rect x="2" y="1" width="22" height="29" rx="1.5" fill="#9cc6e8" stroke="#3f7fb8" stroke-width="1"/><rect x="4" y="3" width="18" height="2" fill="#f5a33a"/><rect x="4" y="5" width="18" height="7" fill="#e8f3fb" stroke="#6f9fc8" stroke-width="0.5"/><g fill="#fff"><rect x="4" y="14" width="3" height="2.5"/><rect x="8.5" y="14" width="3" height="2.5"/><rect x="13" y="14" width="3" height="2.5"/><rect x="17.5" y="14" width="3" height="2.5"/><rect x="4" y="18.5" width="3" height="2.5"/><rect x="8.5" y="18.5" width="3" height="2.5"/><rect x="13" y="18.5" width="3" height="2.5"/><rect x="4" y="23" width="3" height="2.5"/><rect x="8.5" y="23" width="3" height="2.5"/><rect x="13" y="23" width="3" height="2.5"/></g><rect x="17.5" y="18.5" width="3" height="7" fill="#e8a040"/></svg>
<!-- IE -->
<svg class="a" style="left:197px;top:864px" width="33" height="31" viewBox="0 0 33 31"><path d="M16 5a10 10 0 1 0 9.5 13h-6a4.5 4.5 0 0 1-8-1.5h14.5a10 10 0 0 0-10-11.5zm-4.5 9a4.5 4 0 0 1 9 0z" fill="#3ba6e6"/><path d="M3 26q-3-5 8-14t19-10q2 2-2 7" fill="none" stroke="#f2c12e" stroke-width="2.5"/></svg>
<div class="a" style="left:245px;top:861px;width:59px;height:39px;border:1px solid rgba(60,40,50,.75);border-bottom:none;border-radius:3px 3px 0 0;background:linear-gradient(rgba(255,255,255,.55),rgba(255,255,255,.25));box-shadow:inset 0 0 0 1px rgba(255,255,255,.5)"></div>
<svg class="a" style="left:260px;top:866px" width="30" height="28" viewBox="0 0 30 28"><circle cx="15" cy="14" r="13.5" fill="#e03a2e"/><path d="M15 14L3.3 7.2A13.5 13.5 0 0 0 9 26.2z" fill="#3aa94a"/><path d="M15 14L9 26.2A13.5 13.5 0 0 0 28.5 14 13.5 13.5 0 0 0 26.7 7.2z" fill="#f6c42c"/><circle cx="15" cy="14" r="6" fill="#fff"/><circle cx="15" cy="14" r="4.5" fill="#3a7fd0"/></svg>
<div class="a" style="left:306px;top:861px;width:53px;height:39px;border:1px solid rgba(60,40,50,.75);border-bottom:none;border-radius:3px 3px 0 0;background:linear-gradient(rgba(255,255,255,.55),rgba(255,255,255,.25));box-shadow:inset 0 0 0 1px rgba(255,255,255,.5)"></div>
<svg class="a" style="left:318px;top:865px" width="32" height="30" viewBox="0 0 32 30"><path d="M2 6h10l2-3h16v24H2z" fill="#f3d77e" stroke="#c8a84a" stroke-width="0.8"/><rect x="5" y="4" width="3" height="2" fill="#3bb54a"/><rect x="13" y="5" width="3" height="2" fill="#e0503a"/><rect x="21" y="6" width="3" height="2" fill="#3a8fe0"/><path d="M2 9h28v18H2z" fill="#f6e09a"/><path d="M8 15h16v12h-4v-7h-8v7H8z" fill="#a8d4f0" stroke="#5a9fd0" stroke-width="0.8"/></svg>
<div class="a" style="left:361px;top:861px;width:1px;height:39px;background:rgba(60,40,50,.5)"></div>
<div class="a" style="left:364px;top:861px;width:1px;height:39px;background:rgba(60,40,50,.5)"></div>
<div class="a" style="left:368px;top:861px;width:60px;height:39px;border:1px solid rgba(60,40,50,.75);border-bottom:none;border-radius:3px 3px 0 0;background:linear-gradient(rgba(255,255,255,.55),rgba(255,255,255,.25));box-shadow:inset 0 0 0 1px rgba(255,255,255,.5)"></div>
<svg class="a" style="left:383px;top:864px" width="32" height="32" viewBox="0 0 32 32">
<rect width="32" height="32" fill="#fff"/>
<g fill="#0a8ef0">
<path d="M0 0.2Q5 -0.5 7 6.2Q1 6.8 0 0.2z"/>
<path d="M15.2 0.2Q10 -0.5 8 6.2Q14 6.8 15.2 0.2z"/>
<path d="M0 12.9Q5 13.6 7 7.6Q1 6.5 0 12.9z"/>
<path d="M8.4 7.6h3.8v13.7h15.2V11h-10.4v3.7h6.6v3.7H13.4V7.1h14.6a4 4 0 0 1 4 4v10.2a4 4 0 0 1-4 4H12.4a4 4 0 0 1-4-4z"/>
</g>
<text x="20" y="31.5" font-family="Liberation Sans" font-size="5" text-anchor="middle" fill="#5a8ad0" letter-spacing="2">GROUP</text>
</svg>
<div class="a" style="left:431px;top:861px;width:59px;height:39px;border:1px solid rgba(60,40,50,.75);border-bottom:none;border-radius:3px 3px 0 0;background:linear-gradient(rgba(255,255,255,.55),rgba(255,255,255,.25));box-shadow:inset 0 0 0 1px rgba(255,255,255,.5)"></div>
<svg class="a" style="left:444px;top:863px" width="32" height="32" viewBox="0 0 32 32">
<defs><linearGradient id="xlg" x1="0" y1="0" x2="0" y2="1"><stop offset="0" stop-color="#8fcf8f"/><stop offset="0.5" stop-color="#d8f0d8"/><stop offset="1" stop-color="#ffffff"/></linearGradient></defs>
<path d="M7 1.5H30V30H1.5V7Q1.5 1.5 7 1.5z" fill="url(#xlg)" stroke="#2f6f3f" stroke-width="1"/>
<path d="M5 21l20-6 5 2-2 13H5z" fill="#fff" opacity="0.9"/>
<path d="M12 20l16-4M10 24l18-4M10 27.5l18-4" stroke="#9cc89c" stroke-width="1" stroke-dasharray="2 1"/>
<path d="M5.5 7h6.5l3.5 6 3.5-6h6l-6.5 9.5 1.5 2.5h-6l-1-2-3.5 6H3.5l7-10z" fill="#2a8a3a"/>
<path d="M9 7h3l6 9.5-1.5 2.5z" fill="#6cc36c" opacity="0.7"/>
</svg>
<div class="a" style="left:494px;top:861px;width:58px;height:39px;border:1px solid rgba(60,40,50,.75);border-bottom:none;border-radius:3px 3px 0 0;background:linear-gradient(rgba(255,255,255,.55),rgba(255,255,255,.25));box-shadow:inset 0 0 0 1px rgba(255,255,255,.5)"></div>
<svg class="a" style="left:508px;top:863px" width="34" height="34" viewBox="0 0 34 34">
<defs><radialGradient id="ztg" cx="0.55" cy="0.65" r="0.6"><stop offset="0" stop-color="#7fd6ff"/><stop offset="0.5" stop-color="#2f7fcf"/><stop offset="1" stop-color="#163f8f"/></radialGradient></defs>
<circle cx="15" cy="18.5" r="13" fill="url(#ztg)"/>
<path d="M5 28q5 3 10 2.5" stroke="#7a2a9a" stroke-width="1.5" fill="none"/>
<text x="4.5" y="29" font-family="Liberation Sans" font-weight="bold" font-size="11" fill="#000">ZT</text>
<path d="M22 2.5q6 3 4.5 9l-3.5 5.5 0.5-4-4.5 1.5 4-4q2-4-1-6.5z" fill="#f2d02a" stroke="#c8a010" stroke-width="0.5"/>
<path d="M23.5 19l6.5 2.5v5q0 5-6.5 7.5-6.5-2.5-6.5-7.5v-5z" fill="#fff" stroke="#9aa" stroke-width="0.6"/>
<path d="M23.5 20.2v6.3h-5.5v-4.2zM23.5 26.5h5.5q-0.5 4-5.5 6z" fill="#2a7fd6"/>
<path d="M23.5 20.2l5.5 2.1v4.2h-5.5zM23.5 26.5v6q-5-2-5.5-6z" fill="#f6cf2a"/>
</svg>
<div class="a" style="left:555px;top:861px;width:59px;height:39px;border:1px solid rgba(60,40,50,.75);border-bottom:none;border-radius:3px 3px 0 0;background:linear-gradient(rgba(255,255,255,.7),rgba(255,255,255,.35));box-shadow:inset 0 0 0 1px rgba(255,255,255,.5)"></div>
<svg class="a" style="left:568px;top:864px" width="34" height="32" viewBox="0 0 34 32">
<rect x="14" y="0.8" width="6" height="4" fill="#1f5a5a"/>
<circle cx="17" cy="16" r="13.6" fill="#1f5d5d"/>
<circle cx="17" cy="16" r="13.6" fill="none" stroke="#0e2626" stroke-width="1.2" stroke-dasharray="1.5 1.5"/>
<circle cx="17" cy="16" r="9" fill="none" stroke="#2f7a78" stroke-width="1.5"/>
<circle cx="17" cy="16" r="5.5" fill="#173c3c"/>
<circle cx="17" cy="16.2" r="2.1" fill="#f2f4f4"/>
<path d="M4 21h26" stroke="#3a6a6a" stroke-width="0.8"/>
<rect x="1" y="21.8" width="32" height="9.8" fill="#141818"/>
<path d="M9 31.6Q9 23 17 22Q25 23 25 31.6" fill="#3a3f3f"/>
<path d="M13 31.6Q13 26 17 25Q21 26 21 31.6" fill="#1a1e1e"/>
<path d="M3 24h4M27 24h4M3 28h3M28 28h3" stroke="#4a5050" stroke-width="1"/>
</svg>
<!-- tray -->
<div class="t" style="left:1386px;top:872px;font-size:12px;color:#f4e6ee">RU</div>
<div class="a" style="left:1417px;top:879px;width:0;height:0;border-left:4.5px solid transparent;border-right:4.5px solid transparent;border-bottom:5px solid #f4eaf0"></div>
<svg class="a" style="left:1437px;top:872px" width="18" height="18" viewBox="0 0 18 18"><path d="M2 3h6v12H2z" fill="#fff" stroke="#222" stroke-width="1.2"/><path d="M6 5h4v3h4v3h-4v5H6z" fill="#fff" stroke="#222" stroke-width="1.2"/><path d="M10 4v4M13 4v4" stroke="#222" stroke-width="1.2"/></svg>
<svg class="a" style="left:1461px;top:872px" width="18" height="18" viewBox="0 0 18 18"><path d="M2 1v7M5 1v7M1 8h5v3H1zM3.5 11v6" stroke="#222" stroke-width="1.2" fill="#fff"/><rect x="6" y="5" width="11" height="8" fill="#9a8090" stroke="#222" stroke-width="1.2"/><path d="M9 15h6" stroke="#222" stroke-width="1.4"/></svg>
<svg class="a" style="left:1485px;top:872px" width="18" height="18" viewBox="0 0 18 18"><path d="M1.5 6h3l4-4v14l-4-4h-3z" fill="#fff" stroke="#222" stroke-width="1.1"/><path d="M11 6q1.5 3 0 6M13.5 4q3 5 0 10" fill="none" stroke="#222" stroke-width="1.3"/></svg>
<div class="t" style="left:1534px;top:867px;font-size:11px;color:#fff">11:56</div>
<div class="t" style="left:1520px;top:884px;font-size:11px;color:#fff">12.06.2013</div>
<div class="a" style="left:1585px;top:861px;width:15px;height:39px;border:1px solid rgba(80,50,70,.6);border-right:none;background:linear-gradient(#d8b8cc,#c8a4ba);box-shadow:inset 1px 1px 0 rgba(255,255,255,.5)"></div>
</body></html>
